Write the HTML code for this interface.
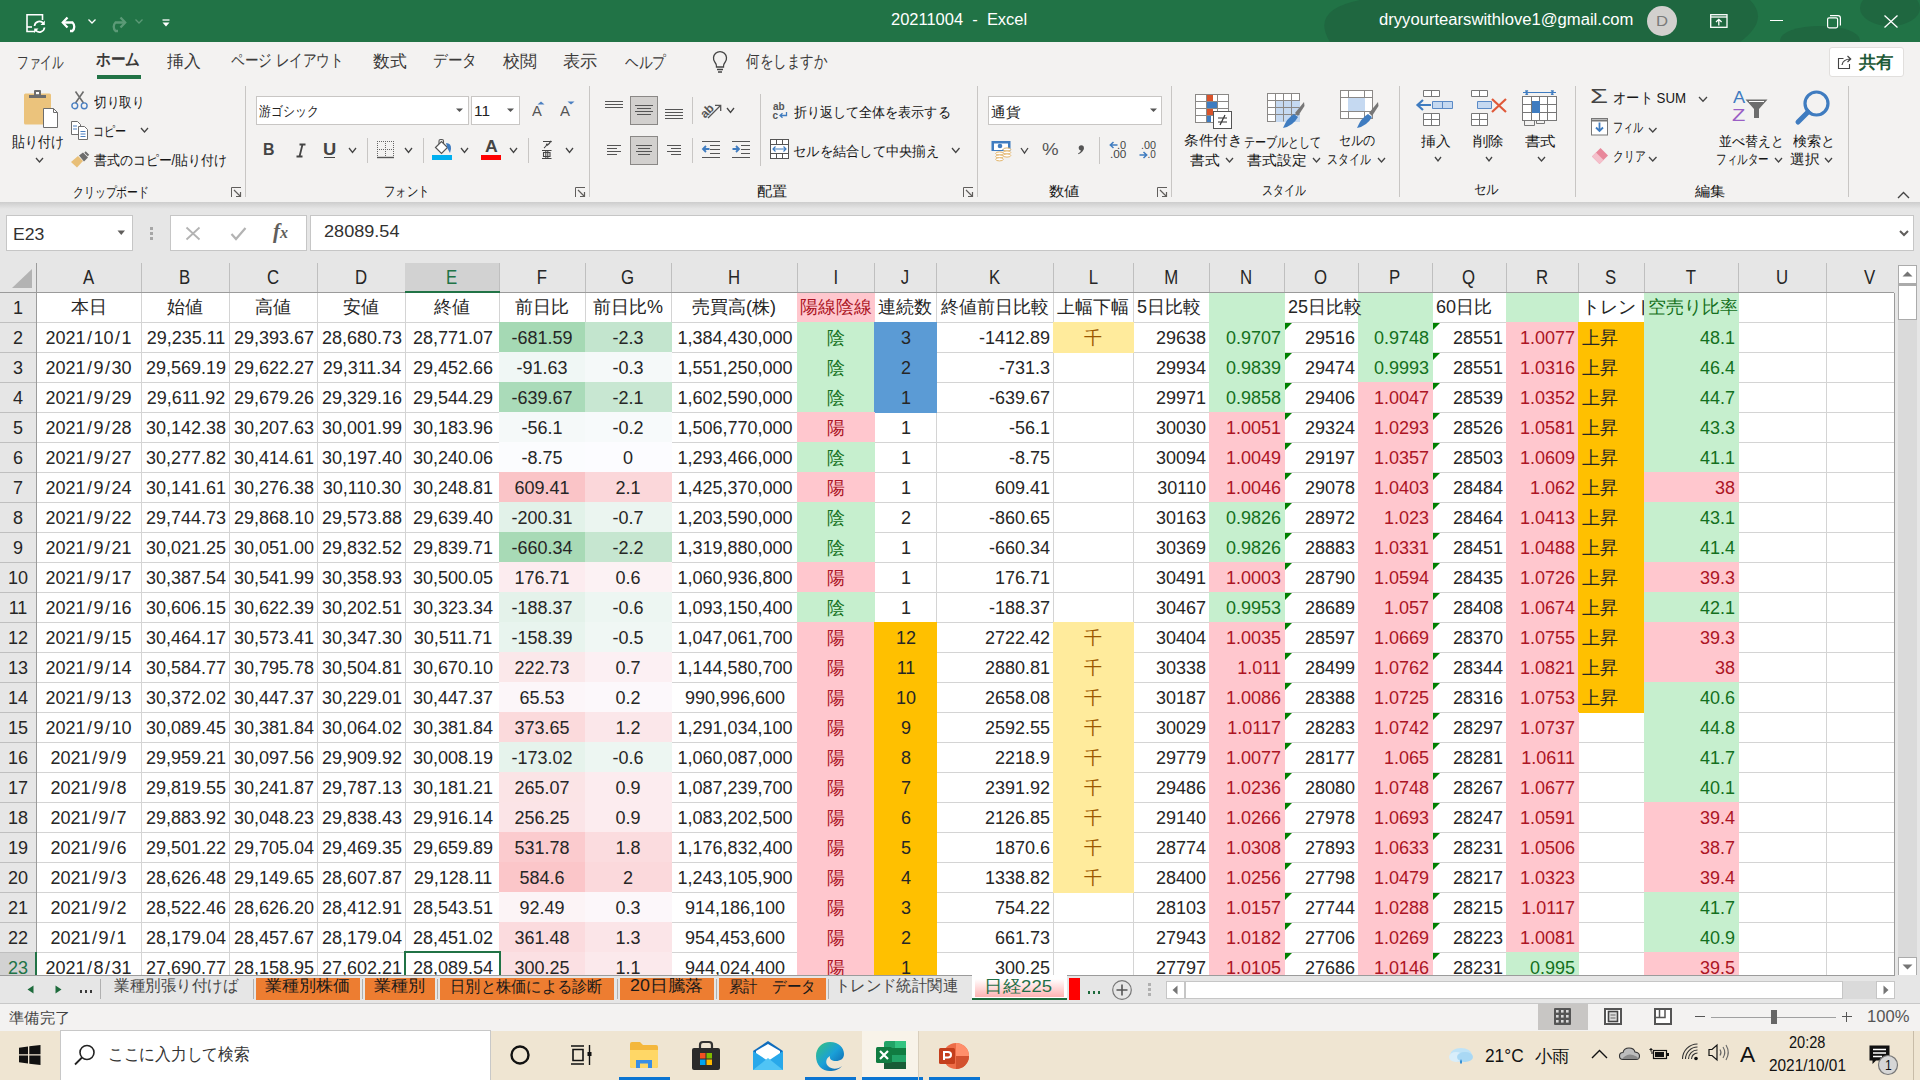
<!DOCTYPE html>
<html><head><meta charset="utf-8"><style>
html,body{margin:0;padding:0;}
body{width:1920px;height:1080px;overflow:hidden;position:relative;background:#f3f2f1;font-family:"Liberation Sans",sans-serif;}
body div, body svg{position:absolute;white-space:nowrap;}
svg{overflow:visible}
</style></head><body>
<div style="left:0px;top:0px;width:1920px;height:42px;background:#217346;overflow:hidden"></div>
<svg style="left:1250px;top:0;overflow:hidden" width="670" height="42" viewBox="0 0 670 42"><g fill="#1f6740"><path d="M80 42 Q60 10 110 0 H500 Q520 20 490 42 Z"/><ellipse cx="570" cy="40" rx="40" ry="14"/><ellipse cx="640" cy="8" rx="30" ry="18"/></g></svg>
<div style="left:890.88px;top:12.28px;font-size:16px;line-height:16px;color:#fff;transform-origin:0 0;transform:scaleX(1.0298);white-space:pre;">20211004  -  Excel</div>
<div style="left:1379.34px;top:12.48px;font-size:16px;line-height:16px;color:#fff;transform-origin:0 0;transform:scaleX(1.0389);">dryyourtearswithlove1@gmail.com</div>
<div style="left:1647px;top:6px;width:30px;height:30px;border-radius:50%;background:#d2d0ce"></div>
<div style="left:1655.67px;top:13.81px;font-size:14px;line-height:14px;color:#7a7a7a;transform-origin:0 0;transform:scaleX(1.1905);">D</div>
<svg style="left:26px;top:14px" width="20" height="19" viewBox="0 0 20 19"><path d="M9 17.5 H1 V0.8 H16.5 V6" fill="none" stroke="#fff" stroke-width="1.6"/><path d="M1 13 H6" stroke="#fff" stroke-width="1.6"/><path d="M8.5 12 A5 5 0 0 1 17.5 9.5" fill="none" stroke="#fff" stroke-width="1.7"/><path d="M18.8 6.5 V11 H14.5 Z" fill="#fff"/><path d="M18.5 13.5 A5 5 0 0 1 9.5 16" fill="none" stroke="#fff" stroke-width="1.7"/><path d="M8.2 19 V14.5 H12.5 Z" fill="#fff"/></svg>
<svg style="left:61px;top:16px" width="19" height="16" viewBox="0 0 19 16"><path d="M3 6.5 H11.5 A6 6 0 0 1 11.5 15 H9" fill="none" stroke="#fff" stroke-width="2.3"/><path d="M6.5 1.5 L1.8 6.5 L6.5 11.5" fill="none" stroke="#fff" stroke-width="2.3"/></svg>
<svg style="left:88px;top:19px" width="8" height="5" viewBox="0 0 8 5"><path d="M0.5 0.5 L4 4 L7.5 0.5" stroke="#fff" stroke-width="1.3" fill="none"/></svg>
<svg style="left:108px;top:16px" width="19" height="16" viewBox="0 0 19 16"><path d="M16 6.5 H7.5 A6 6 0 0 0 7.5 15 H10" fill="none" stroke="#5c9a77" stroke-width="2.3"/><path d="M12.5 1.5 L17.2 6.5 L12.5 11.5" fill="none" stroke="#5c9a77" stroke-width="2.3"/></svg>
<svg style="left:135px;top:19px" width="8" height="5" viewBox="0 0 8 5"><path d="M0.5 0.5 L4 4 L7.5 0.5" stroke="#5c9a77" stroke-width="1.3" fill="none"/></svg>
<svg style="left:162px;top:19px" width="8" height="8" viewBox="0 0 8 8"><path d="M0.5 1 H7.5" stroke="#fff" stroke-width="1.3"/><path d="M0.5 3.5 H7.5 L4 7.5 Z" fill="#fff"/></svg>
<svg style="left:1710px;top:14px" width="18" height="14" viewBox="0 0 18 14"><rect x="0.7" y="0.7" width="16.3" height="12.6" fill="none" stroke="#fff" stroke-width="1.3"/><path d="M0.7 3 H17" stroke="#fff" stroke-width="1.3"/><path d="M8.8 11.5 V5.5 M6 8 L8.8 5.3 L11.6 8" stroke="#fff" stroke-width="1.3" fill="none"/></svg>
<div style="left:1770px;top:20px;width:13px;height:1px;background:#fff"></div>
<svg style="left:1827px;top:15px" width="14" height="13" viewBox="0 0 14 13"><rect x="0.6" y="2.8" width="10" height="10" rx="1.5" fill="none" stroke="#fff" stroke-width="1.2"/><path d="M3 0.6 H11 Q13.4 0.6 13.4 3 V10.5" fill="none" stroke="#fff" stroke-width="1.2"/></svg>
<svg style="left:1884px;top:15px" width="14" height="13" viewBox="0 0 14 13"><path d="M0.5 0.5 L13.5 12.5 M13.5 0.5 L0.5 12.5" stroke="#fff" stroke-width="1.3"/></svg>
<div style="left:16.62px;top:53.69px;font-size:17px;line-height:17px;color:#3b3a39;transform-origin:0 0;transform:scaleX(0.6863);">ファイル</div>
<div style="left:96.32px;top:51.31px;font-size:17px;line-height:17px;color:#3b3a39;transform-origin:0 0;transform:scaleX(0.8591);font-weight:bold;">ホーム</div>
<div style="left:167.23px;top:53.02px;font-size:17px;line-height:17px;color:#3b3a39;transform-origin:0 0;transform:scaleX(0.9894);">挿入</div>
<div style="left:231.03px;top:51.99px;font-size:17px;line-height:17px;color:#3b3a39;transform-origin:0 0;transform:scaleX(0.8009);">ページ レイアウト</div>
<div style="left:372.83px;top:52.85px;font-size:17px;line-height:17px;color:#3b3a39;transform-origin:0 0;transform:scaleX(0.9894);">数式</div>
<div style="left:432.72px;top:52.16px;font-size:17px;line-height:17px;color:#3b3a39;transform-origin:0 0;transform:scaleX(0.8581);">データ</div>
<div style="left:503.10px;top:52.85px;font-size:17px;line-height:17px;color:#3b3a39;transform-origin:0 0;transform:scaleX(0.9976);">校閲</div>
<div style="left:563.48px;top:52.85px;font-size:17px;line-height:17px;color:#3b3a39;transform-origin:0 0;transform:scaleX(1.0119);">表示</div>
<div style="left:625.46px;top:53.69px;font-size:17px;line-height:17px;color:#3b3a39;transform-origin:0 0;transform:scaleX(0.8048);">ヘルプ</div>
<div style="left:746.40px;top:52.84px;font-size:17px;line-height:17px;color:#3b3a39;transform-origin:0 0;transform:scaleX(0.7962);">何をしますか</div>
<div style="left:97px;top:75px;width:44px;height:4px;background:#217346"></div>
<div style="left:245px;top:86px;width:1px;height:111px;background:#c8c6c4"></div>
<div style="left:589px;top:86px;width:1px;height:111px;background:#c8c6c4"></div>
<div style="left:977px;top:86px;width:1px;height:111px;background:#c8c6c4"></div>
<div style="left:1171px;top:86px;width:1px;height:111px;background:#c8c6c4"></div>
<div style="left:1399px;top:86px;width:1px;height:111px;background:#c8c6c4"></div>
<div style="left:1575px;top:86px;width:1px;height:111px;background:#c8c6c4"></div>
<div style="left:1848px;top:86px;width:1px;height:111px;background:#c8c6c4"></div>
<svg style="left:24px;top:90px" width="34" height="38" viewBox="0 0 34 38"><rect x="0" y="3.5" width="27" height="31" rx="1.5" fill="#ebc37c"/><path d="M5 5 H22 V8 H5 Z" fill="#6d6d6d"/><rect x="10" y="0" width="7" height="6" rx="1" fill="#6d6d6d"/><rect x="12" y="2" width="3" height="2.2" fill="#fff"/><path d="M19.5 18.5 H29.5 L33.5 22.5 V37.5 H19.5 Z" fill="#fff" stroke="#6d6d6d" stroke-width="1"/><path d="M29.5 18.5 V22.5 H33.5" fill="none" stroke="#6d6d6d" stroke-width="1"/></svg>
<div style="left:11.87px;top:133.60px;font-size:15px;line-height:15px;color:#161616;transform-origin:0 0;transform:scaleX(0.8588);">貼り付け</div>
<svg style="left:35px;top:156.5px" width="9" height="6" viewBox="0 0 9 6"><path d="M1 1 L4.5 5 L8 1" fill="none" stroke="#444" stroke-width="1.3"/></svg>
<svg style="left:71px;top:91px" width="17" height="19" viewBox="0 0 17 19"><path d="M4.5 12 L12.5 0.5 M12.5 12 L4.5 0.5" stroke="#6d6d6d" stroke-width="1.6" fill="none"/><circle cx="3.8" cy="14.8" r="2.9" fill="none" stroke="#4a7fc1" stroke-width="1.4"/><circle cx="13.2" cy="14.8" r="2.9" fill="none" stroke="#4a7fc1" stroke-width="1.4"/></svg>
<div style="left:94.27px;top:95.23px;font-size:14px;line-height:14px;color:#161616;transform-origin:0 0;transform:scaleX(0.9024);">切り取り</div>
<svg style="left:71px;top:121px" width="18" height="19" viewBox="0 0 18 19"><path d="M0.5 0.5 H6.5 L9.5 3.5 V13.5 H0.5 Z" fill="#fff" stroke="#6d6d6d"/><path d="M7.5 5.5 H13.5 L16.5 8.5 V18.5 H7.5 Z" fill="#fff" stroke="#6d6d6d"/><path d="M2 5 H6 M2 8 H6 M9.5 10.5 H14.5 M9.5 13 H14.5 M9.5 15.5 H14.5" stroke="#4a7fc1" stroke-width="1"/></svg>
<div style="left:92.73px;top:123.96px;font-size:14px;line-height:14px;color:#161616;transform-origin:0 0;transform:scaleX(0.7931);">コピー</div>
<svg style="left:140px;top:127px" width="9" height="6" viewBox="0 0 9 6"><path d="M1 1 L4.5 5 L8 1" fill="none" stroke="#444" stroke-width="1.3"/></svg>
<svg style="left:71px;top:152px" width="18" height="16" viewBox="0 0 18 16"><path d="M0 10 L7 4 L12 9 L6 15.5 Z" fill="#e8bf78"/><path d="M8 3.5 L12 0.5 L17 5.5 L13 9.5 Z" fill="#6d6d6d"/><path d="M14 0 L17.5 3.5" stroke="#6d6d6d" stroke-width="2"/></svg>
<div style="left:94.14px;top:153.38px;font-size:14px;line-height:14px;color:#161616;transform-origin:0 0;transform:scaleX(0.9224);">書式のコピー/貼り付け</div>
<div style="left:73.40px;top:184.51px;font-size:14px;line-height:14px;color:#161616;transform-origin:0 0;transform:scaleX(0.7766);">クリップボード</div>
<svg style="left:231px;top:187px" width="11" height="11" viewBox="0 0 11 11"><path d="M0.5 10 V0.5 H10" fill="none" stroke="#605e5c" stroke-width="1"/><path d="M3 3 L9.5 9.5 M5 9.5 H9.5 V5" fill="none" stroke="#605e5c" stroke-width="1.2"/></svg>
<div style="left:256px;top:96px;width:213px;height:29px;background:#fff;border:1px solid #c8c6c4;box-sizing:border-box"></div>
<div style="left:258.66px;top:104.29px;font-size:14px;line-height:14px;color:#222;transform-origin:0 0;transform:scaleX(0.8504);">游ゴシック</div>
<svg style="left:456px;top:108px" width="8" height="5" viewBox="0 0 8 5"><path d="M0 0.5 H7 L3.5 4 Z" fill="#555"/></svg>
<div style="left:471px;top:96px;width:49px;height:29px;background:#fff;border:1px solid #c8c6c4;box-sizing:border-box"></div>
<div style="left:474.07px;top:104.41px;font-size:14px;line-height:14px;color:#222;transform-origin:0 0;transform:scaleX(1.0967);">11</div>
<svg style="left:507px;top:108px" width="8" height="5" viewBox="0 0 8 5"><path d="M0 0.5 H7 L3.5 4 Z" fill="#555"/></svg>
<div style="left:531.60px;top:103.51px;font-size:14px;line-height:14px;color:#555;transform-origin:0 0;transform:scaleX(1.0498);">A</div>
<svg style="left:537px;top:101px" width="8" height="4" viewBox="0 0 8 4"><path d="M0.5 3.5 L4 0.5 L7.5 3.5 Z" fill="#4a7fc1"/></svg>
<div style="left:560.30px;top:103.51px;font-size:14px;line-height:14px;color:#555;transform-origin:0 0;transform:scaleX(1.0714);">A</div>
<svg style="left:567px;top:101px" width="8" height="4" viewBox="0 0 8 4"><path d="M0.5 0.5 L4 3.5 L7.5 0.5 Z" fill="#4a7fc1"/></svg>
<div style="left:263.09px;top:141.80px;font-size:16px;line-height:16px;color:#444;transform-origin:0 0;transform:scaleX(0.9939);font-weight:bold;">B</div>
<svg style="left:296px;top:144px" width="10" height="13" viewBox="0 0 10 13"><path d="M3.5 0.5 H9.5 M0.5 12.5 H6.5 M6.5 0.5 L3.5 12.5" fill="none" stroke="#444" stroke-width="1.8"/></svg>
<div style="left:322.90px;top:141.80px;font-size:16px;line-height:16px;color:#444;transform-origin:0 0;transform:scaleX(1.1458);font-weight:bold;">U</div>
<div style="left:324px;top:157px;width:11px;height:1px;background:#444"></div>
<svg style="left:348px;top:147.2px" width="9" height="6.4" viewBox="0 0 9 6.4"><path d="M1 1 L4.5 5.4 L8 1" fill="none" stroke="#444" stroke-width="1.3"/></svg>
<div style="left:367px;top:137.6px;width:1px;height:25.700000000000017px;background:#c8c6c4"></div>
<svg style="left:377px;top:141px" width="18" height="18" viewBox="0 0 18 18"><rect x="0.0" y="0" width="1" height="1" fill="#666"/><rect x="0.0" y="2" width="1" height="1" fill="#666"/><rect x="0.0" y="4" width="1" height="1" fill="#666"/><rect x="0.0" y="6" width="1" height="1" fill="#666"/><rect x="0.0" y="8" width="1" height="1" fill="#666"/><rect x="0.0" y="10" width="1" height="1" fill="#666"/><rect x="0.0" y="12" width="1" height="1" fill="#666"/><rect x="0.0" y="14" width="1" height="1" fill="#666"/><rect x="0.0" y="16" width="1" height="1" fill="#666"/><rect x="8.0" y="0" width="1" height="1" fill="#666"/><rect x="8.0" y="2" width="1" height="1" fill="#666"/><rect x="8.0" y="4" width="1" height="1" fill="#666"/><rect x="8.0" y="6" width="1" height="1" fill="#666"/><rect x="8.0" y="8" width="1" height="1" fill="#666"/><rect x="8.0" y="10" width="1" height="1" fill="#666"/><rect x="8.0" y="12" width="1" height="1" fill="#666"/><rect x="8.0" y="14" width="1" height="1" fill="#666"/><rect x="8.0" y="16" width="1" height="1" fill="#666"/><rect x="16.0" y="0" width="1" height="1" fill="#666"/><rect x="16.0" y="2" width="1" height="1" fill="#666"/><rect x="16.0" y="4" width="1" height="1" fill="#666"/><rect x="16.0" y="6" width="1" height="1" fill="#666"/><rect x="16.0" y="8" width="1" height="1" fill="#666"/><rect x="16.0" y="10" width="1" height="1" fill="#666"/><rect x="16.0" y="12" width="1" height="1" fill="#666"/><rect x="16.0" y="14" width="1" height="1" fill="#666"/><rect x="16.0" y="16" width="1" height="1" fill="#666"/><rect x="0" y="0.0" width="1" height="1" fill="#666"/><rect x="2" y="0.0" width="1" height="1" fill="#666"/><rect x="4" y="0.0" width="1" height="1" fill="#666"/><rect x="6" y="0.0" width="1" height="1" fill="#666"/><rect x="8" y="0.0" width="1" height="1" fill="#666"/><rect x="10" y="0.0" width="1" height="1" fill="#666"/><rect x="12" y="0.0" width="1" height="1" fill="#666"/><rect x="14" y="0.0" width="1" height="1" fill="#666"/><rect x="16" y="0.0" width="1" height="1" fill="#666"/><rect x="0" y="8.0" width="1" height="1" fill="#666"/><rect x="2" y="8.0" width="1" height="1" fill="#666"/><rect x="4" y="8.0" width="1" height="1" fill="#666"/><rect x="6" y="8.0" width="1" height="1" fill="#666"/><rect x="8" y="8.0" width="1" height="1" fill="#666"/><rect x="10" y="8.0" width="1" height="1" fill="#666"/><rect x="12" y="8.0" width="1" height="1" fill="#666"/><rect x="14" y="8.0" width="1" height="1" fill="#666"/><rect x="16" y="8.0" width="1" height="1" fill="#666"/><path d="M0 16.5 H17" stroke="#555" stroke-width="1.4"/></svg>
<svg style="left:404px;top:147.2px" width="9" height="6.4" viewBox="0 0 9 6.4"><path d="M1 1 L4.5 5.4 L8 1" fill="none" stroke="#444" stroke-width="1.3"/></svg>
<div style="left:423px;top:137.6px;width:1px;height:25.700000000000017px;background:#c8c6c4"></div>
<svg style="left:432px;top:139px" width="21" height="21" viewBox="0 0 21 21"><path d="M3.5 8.5 L9.5 2.5 L15.5 8.5 L9.5 14.5 Z" fill="#fff" stroke="#555" stroke-width="1.2"/><path d="M7 5 V2 Q7 0.5 8.5 0.5 H10 Q11.5 0.5 11.5 2 V5" fill="none" stroke="#555" stroke-width="1.1"/><path d="M14 4 Q19.5 4 19 10 L18 14 Q16.5 11 15.5 9.5 Z" fill="#3f7cc0"/><rect x="0" y="16" width="20" height="5" fill="#00b0f0"/></svg>
<svg style="left:460px;top:147.2px" width="9" height="6.4" viewBox="0 0 9 6.4"><path d="M1 1 L4.5 5.4 L8 1" fill="none" stroke="#444" stroke-width="1.3"/></svg>
<div style="left:484.67px;top:138.34px;font-size:17px;line-height:17px;color:#444;transform-origin:0 0;transform:scaleX(1.0360);font-weight:bold;">A</div>
<div style="left:481px;top:155px;width:20px;height:5px;background:#ff0000"></div>
<svg style="left:509px;top:147.2px" width="9" height="6.4" viewBox="0 0 9 6.4"><path d="M1 1 L4.5 5.4 L8 1" fill="none" stroke="#444" stroke-width="1.3"/></svg>
<div style="left:528px;top:137.6px;width:1px;height:25.700000000000017px;background:#c8c6c4"></div>
<svg style="left:541px;top:140px" width="12" height="20" viewBox="0 0 12 20"><path d="M2 1.5 H9.5 Q8.5 4 6 5.5 M6 3.5 Q5.5 6.5 3 8" fill="none" stroke="#444" stroke-width="1.2"/><path d="M9.5 0.3 L11 1.5 L9.8 2.8 Z" fill="#444"/><path d="M1 10.5 H10.5 M1 18.5 H10.5 M2.5 12.5 H9 V16.5 H2.5 Z M4.8 10.5 V18.5 M6.8 10.5 V18.5" fill="none" stroke="#444" stroke-width="1.1"/></svg>
<svg style="left:565px;top:147.2px" width="9" height="6.4" viewBox="0 0 9 6.4"><path d="M1 1 L4.5 5.4 L8 1" fill="none" stroke="#444" stroke-width="1.3"/></svg>
<div style="left:384.35px;top:183.73px;font-size:14px;line-height:14px;color:#161616;transform-origin:0 0;transform:scaleX(0.8103);">フォント</div>
<svg style="left:575px;top:187px" width="11" height="11" viewBox="0 0 11 11"><path d="M0.5 10 V0.5 H10" fill="none" stroke="#605e5c" stroke-width="1"/><path d="M3 3 L9.5 9.5 M5 9.5 H9.5 V5" fill="none" stroke="#605e5c" stroke-width="1.2"/></svg>
<div style="left:630px;top:96px;width:28px;height:29px;background:#d2d0ce;border:1px solid #8a8886;box-sizing:border-box"></div>
<div style="left:630px;top:136px;width:28px;height:29px;background:#d2d0ce;border:1px solid #8a8886;box-sizing:border-box"></div>
<svg style="left:0;top:0" width="1920" height="210"><path d="M605 101.5H623M605 104.5H623M605 107.5H623M635 105.5H653M637 108.5H651M635 111.5H653M637 114.5H651M665 109.5H683M665 112.5H683M665 115.5H683M665 118.5H683M607 145.5H621M607 148.5H617M607 151.5H621M607 154.5H617M636 145.5H652M638 148.5H650M636 151.5H652M638 154.5H650M667 145.5H681M671 148.5H681M667 151.5H681M671 154.5H681M702 141.5H720M710 145.5H720M710 149.5H720M710 153.5H720M702 157.5H720M732 141.5H750M741 145.5H750M741 149.5H750M741 153.5H750M732 157.5H750" stroke="#555" stroke-width="1.1" fill="none"/></svg>
<svg style="left:702px;top:145px" width="8" height="8" viewBox="0 0 8 8"><path d="M7.5 4 H1.5 M4 1 L1 4 L4 7" stroke="#3f7cc0" stroke-width="1.8" fill="none"/></svg>
<svg style="left:732px;top:145px" width="8" height="8" viewBox="0 0 8 8"><path d="M0.5 4 H6.5 M4 1 L7 4 L4 7" stroke="#3f7cc0" stroke-width="1.8" fill="none"/></svg>
<div style="left:692px;top:97px;width:1px;height:27px;background:#c8c6c4"></div>
<div style="left:692px;top:137.5px;width:1px;height:25.5px;background:#c8c6c4"></div>
<svg style="left:700px;top:101px" width="22" height="18" viewBox="0 0 22 18"><g transform="rotate(-45 7 10)"><text x="0" y="14" font-family="Liberation Sans" font-weight="bold" font-size="12" fill="#555">ab</text></g><path d="M8 17 L20 5 M15 4.3 H20.7 V10" stroke="#555" stroke-width="1.3" fill="none"/></svg>
<svg style="left:725.6px;top:106.8px" width="9" height="6.5" viewBox="0 0 9 6.5"><path d="M1 1 L4.5 5.5 L8 1" fill="none" stroke="#444" stroke-width="1.3"/></svg>
<div style="left:760px;top:94px;width:1px;height:72px;background:#c8c6c4"></div>
<svg style="left:772px;top:102px" width="18" height="18" viewBox="0 0 18 18"><text x="1" y="8" font-family="Liberation Sans" font-weight="bold" font-size="10" fill="#555">ab</text><text x="0.5" y="16.5" font-family="Liberation Sans" font-weight="bold" font-size="10" fill="#555">c</text><path d="M14.5 10 V13.5 H8.5 M10.5 11.3 L8 13.5 L10.5 15.8" stroke="#3f7cc0" stroke-width="1.3" fill="none"/></svg>
<div style="left:793.77px;top:104.57px;font-size:14px;line-height:14px;color:#161616;transform-origin:0 0;transform:scaleX(0.9319);">折り返して全体を表示する</div>
<svg style="left:770px;top:139px" width="20" height="20" viewBox="0 0 20 20"><rect x="0.5" y="0.5" width="18" height="19" fill="#fff" stroke="#555"/><path d="M0.5 5.5 H18.5 M0.5 14.5 H18.5 M6.5 0.5 V5.5 M12.5 0.5 V5.5 M6.5 14.5 V19.5 M12.5 14.5 V19.5" stroke="#555" fill="none"/><path d="M3 10 H16 M5.5 7.5 L3 10 L5.5 12.5 M13.5 7.5 L16 10 L13.5 12.5" stroke="#3f7cc0" stroke-width="1.2" fill="none"/></svg>
<div style="left:793.10px;top:144.03px;font-size:14px;line-height:14px;color:#161616;transform-origin:0 0;transform:scaleX(0.9483);">セルを結合して中央揃え</div>
<svg style="left:951.2px;top:147.4px" width="9.5" height="6.5" viewBox="0 0 9.5 6.5"><path d="M1 1 L4.75 5.5 L8.5 1" fill="none" stroke="#444" stroke-width="1.3"/></svg>
<div style="left:757.09px;top:183.79px;font-size:14px;line-height:14px;color:#161616;transform-origin:0 0;transform:scaleX(1.0863);">配置</div>
<svg style="left:963px;top:187px" width="11" height="11" viewBox="0 0 11 11"><path d="M0.5 10 V0.5 H10" fill="none" stroke="#605e5c" stroke-width="1"/><path d="M3 3 L9.5 9.5 M5 9.5 H9.5 V5" fill="none" stroke="#605e5c" stroke-width="1.2"/></svg>
<div style="left:988px;top:96px;width:174px;height:29px;background:#fff;border:1px solid #c8c6c4;box-sizing:border-box"></div>
<div style="left:991.06px;top:104.97px;font-size:14px;line-height:14px;color:#222;transform-origin:0 0;transform:scaleX(1.0493);">通貨</div>
<svg style="left:1150px;top:108px" width="8" height="5" viewBox="0 0 8 5"><path d="M0 0.5 H7 L3.5 4 Z" fill="#555"/></svg>
<svg style="left:991px;top:140px" width="21" height="21" viewBox="0 0 21 21"><rect x="0.5" y="1" width="19" height="10" fill="#3f7cc0"/><path d="M3 3.5 H17 V8.5 H14 Q12 8.5 11 10 H3 Z" fill="#fff"/><circle cx="9" cy="6" r="2.3" fill="#3f7cc0"/><g fill="#fff" stroke="#e3b66e" stroke-width="1"><ellipse cx="16" cy="9.5" rx="3.8" ry="1.6"/><ellipse cx="16" cy="12.5" rx="3.8" ry="1.6"/><ellipse cx="16" cy="15.5" rx="3.8" ry="1.6"/><ellipse cx="8.5" cy="13.5" rx="3.8" ry="1.6"/><ellipse cx="8.5" cy="16.5" rx="3.8" ry="1.6"/><ellipse cx="8.5" cy="19.3" rx="3.8" ry="1.6"/></g></svg>
<svg style="left:1020px;top:146.6px" width="9" height="7" viewBox="0 0 9 7"><path d="M1 1 L4.5 6 L8 1" fill="none" stroke="#444" stroke-width="1.3"/></svg>
<div style="left:1042.34px;top:140.51px;font-size:17px;line-height:17px;color:#555;transform-origin:0 0;transform:scaleX(1.0976);">%</div>
<svg style="left:1077px;top:145px" width="8" height="10" viewBox="0 0 8 10"><circle cx="4.3" cy="2.8" r="2.6" fill="#555"/><path d="M6.6 3 Q6.8 7 1.5 9.3 L1 8.6 Q4 7 4.2 4.5 Z" fill="#555"/></svg>
<div style="left:1099px;top:137.3px;width:1px;height:26.299999999999983px;background:#c8c6c4"></div>
<div style="left:1117.01px;top:140.53px;font-size:10px;line-height:10px;color:#444;transform-origin:0 0;transform:scaleX(1.0986);">.0</div>
<div style="left:1109.94px;top:149.53px;font-size:10px;line-height:10px;color:#444;transform-origin:0 0;transform:scaleX(1.1746);">.00</div>
<svg style="left:1109px;top:141px" width="9" height="8" viewBox="0 0 9 8"><path d="M8.5 4 H1.5 M4.5 1 L1.3 4 L4.5 7" stroke="#3f7cc0" stroke-width="1.5" fill="none"/></svg>
<div style="left:1141.03px;top:140.53px;font-size:10px;line-height:10px;color:#444;transform-origin:0 0;transform:scaleX(1.0794);">.00</div>
<div style="left:1147.60px;top:149.53px;font-size:10px;line-height:10px;color:#444;transform-origin:0 0;transform:scaleX(1.0000);">.0</div>
<svg style="left:1139px;top:150.5px" width="9" height="8" viewBox="0 0 9 8"><path d="M0.5 4 H7.5 M4.5 1 L7.7 4 L4.5 7" stroke="#3f7cc0" stroke-width="1.5" fill="none"/></svg>
<div style="left:1048.85px;top:183.65px;font-size:14px;line-height:14px;color:#161616;transform-origin:0 0;transform:scaleX(1.0952);">数値</div>
<svg style="left:1157px;top:187px" width="11" height="11" viewBox="0 0 11 11"><path d="M0.5 10 V0.5 H10" fill="none" stroke="#605e5c" stroke-width="1"/><path d="M3 3 L9.5 9.5 M5 9.5 H9.5 V5" fill="none" stroke="#605e5c" stroke-width="1.2"/></svg>
<svg style="left:1195px;top:94px" width="37" height="35" viewBox="0 0 37 35"><g stroke="#8a8886" fill="#fff"><rect x="0.5" y="0.5" width="33" height="28"/></g><path d="M0.5 7.5H33.5M0.5 14.5H33.5M0.5 21.5H33.5M11.5 0.5V28.5M22.5 0.5V28.5" stroke="#8a8886" fill="none"/><rect x="12" y="1" width="6" height="6" fill="#d9532b"/><rect x="12" y="8" width="10" height="6" fill="#3f7cc0"/><rect x="12" y="15" width="6" height="6" fill="#d9532b"/><rect x="12" y="22" width="4" height="6" fill="#3f7cc0"/><rect x="18.5" y="17.5" width="18" height="17" fill="#fff" stroke="#555"/><path d="M23 24 H32 M23 28 H32 M30 21 L25 31" stroke="#333" stroke-width="1.2"/></svg>
<div style="left:1183.86px;top:133.25px;font-size:14px;line-height:14px;color:#161616;transform-origin:0 0;transform:scaleX(1.0448);">条件付き</div>
<div style="left:1189.71px;top:152.93px;font-size:14px;line-height:14px;color:#161616;transform-origin:0 0;transform:scaleX(1.0530);">書式</div>
<svg style="left:1225px;top:156.9px" width="9" height="6" viewBox="0 0 9 6"><path d="M1 1 L4.5 5 L8 1" fill="none" stroke="#444" stroke-width="1.3"/></svg>
<svg style="left:1267px;top:93px" width="38" height="36" viewBox="0 0 38 36"><rect x="0.5" y="0.5" width="32" height="28" fill="#fff" stroke="#8a8886"/><rect x="9" y="8" width="24" height="21" fill="#c5d9f1"/><path d="M0.5 7.5H32.5M0.5 14.5H32.5M0.5 21.5H32.5M8.5 0.5V28.5M16.5 0.5V28.5M24.5 0.5V28.5" stroke="#8a8886" fill="none"/><path d="M37 9 L28 20 L31 23 L37.5 13 Z" fill="#777"/><path d="M27 21 Q20 25 16 35 Q26 33 31 24 Z" fill="#3f7cc0"/></svg>
<div style="left:1244.22px;top:134.91px;font-size:14px;line-height:14px;color:#161616;transform-origin:0 0;transform:scaleX(0.7916);">テーブルとして</div>
<div style="left:1247.40px;top:153.21px;font-size:14px;line-height:14px;color:#161616;transform-origin:0 0;transform:scaleX(1.0596);">書式設定</div>
<svg style="left:1311.6px;top:156.9px" width="9" height="6" viewBox="0 0 9 6"><path d="M1 1 L4.5 5 L8 1" fill="none" stroke="#444" stroke-width="1.3"/></svg>
<svg style="left:1340px;top:90px" width="39" height="39" viewBox="0 0 39 39"><rect x="0.5" y="0.5" width="32" height="28" fill="#fff" stroke="#8a8886"/><path d="M0.5 7.5H32.5M0.5 21.5H32.5M8.5 0.5V7.5M24.5 0.5V7.5M8.5 21.5V28.5M24.5 21.5V28.5" stroke="#8a8886" fill="none"/><rect x="8" y="8" width="17" height="13" fill="#c5d9f1"/><path d="M38 12 L29 23 L32 26 L38.5 16 Z" fill="#777"/><path d="M28 24 Q21 28 17 38 Q27 36 32 27 Z" fill="#3f7cc0"/></svg>
<div style="left:1339.28px;top:132.81px;font-size:14px;line-height:14px;color:#161616;transform-origin:0 0;transform:scaleX(0.8620);">セルの</div>
<div style="left:1326.63px;top:151.95px;font-size:14px;line-height:14px;color:#161616;transform-origin:0 0;transform:scaleX(0.7787);">スタイル</div>
<svg style="left:1377px;top:156.9px" width="9" height="6" viewBox="0 0 9 6"><path d="M1 1 L4.5 5 L8 1" fill="none" stroke="#444" stroke-width="1.3"/></svg>
<div style="left:1262.43px;top:182.95px;font-size:14px;line-height:14px;color:#161616;transform-origin:0 0;transform:scaleX(0.7805);">スタイル</div>
<svg style="left:1416px;top:90px" width="38" height="37" viewBox="0 0 38 37"><path d="M7.5 0.5h16v6h-16z M15.5 0.5v6 M7.5 23.5h16v12h-16z M7.5 29.5h16 M15.5 23.5v12" stroke="#777" fill="#fff"/><path d="M16.5 11.5h20v7h-20z M26.5 11.5v7" stroke="#5a8ac6" fill="#c5d9f1"/><path d="M15 15 H2 M7 10 L1.5 15 L7 20" stroke="#3f7cc0" stroke-width="2.2" fill="none"/></svg>
<div style="left:1420.85px;top:133.77px;font-size:14px;line-height:14px;color:#161616;transform-origin:0 0;transform:scaleX(1.0623);">挿入</div>
<svg style="left:1433.7px;top:156.2px" width="8" height="6" viewBox="0 0 8 6"><path d="M1 1 L4.0 5 L7 1" fill="none" stroke="#444" stroke-width="1.3"/></svg>
<svg style="left:1471px;top:90px" width="37" height="37" viewBox="0 0 37 37"><path d="M0.5 0.5h16v6h-16z M8.5 0.5v6 M0.5 23.5h16v12h-16z M0.5 29.5h16 M8.5 23.5v12" stroke="#777" fill="#fff"/><path d="M6.5 11.5h14v7h-14z" stroke="#5a8ac6" fill="#c5d9f1"/><path d="M21 9 L35 22 M35 9 L21 22" stroke="#e05a3a" stroke-width="2.2"/></svg>
<div style="left:1472.69px;top:133.63px;font-size:14px;line-height:14px;color:#161616;transform-origin:0 0;transform:scaleX(1.1009);">削除</div>
<svg style="left:1485px;top:156.2px" width="8" height="6" viewBox="0 0 8 6"><path d="M1 1 L4.0 5 L7 1" fill="none" stroke="#444" stroke-width="1.3"/></svg>
<svg style="left:1522px;top:89px" width="36" height="38" viewBox="0 0 36 38"><path d="M1 3.5H34 M4 1V6 M31 1V6 M6 1.5L3.5 3.5L6 5.5 M29 1.5L31.5 3.5L29 5.5" stroke="#3f7cc0" stroke-width="1.2" fill="none"/><rect x="0.5" y="7.5" width="34" height="24" fill="#fff" stroke="#777"/><path d="M0.5 15.5H34.5M0.5 23.5H34.5M9.5 7.5V31.5M17.5 7.5V31.5M25.5 7.5V31.5" stroke="#777" fill="none"/><rect x="10" y="12" width="8" height="12" fill="#3f7cc0"/><path d="M2.5 31.5 v5 h10 v-5 M14.5 31.5 v3 h8 v-3" stroke="#777" fill="none"/></svg>
<div style="left:1524.69px;top:133.63px;font-size:14px;line-height:14px;color:#161616;transform-origin:0 0;transform:scaleX(1.1046);">書式</div>
<svg style="left:1537px;top:156.2px" width="9" height="6" viewBox="0 0 9 6"><path d="M1 1 L4.5 5 L8 1" fill="none" stroke="#444" stroke-width="1.3"/></svg>
<div style="left:1473.75px;top:182.11px;font-size:14px;line-height:14px;color:#161616;transform-origin:0 0;transform:scaleX(0.8892);">セル</div>
<div style="left:1590.35px;top:86.37px;font-size:20px;line-height:20px;color:#444;transform-origin:0 0;transform:scaleX(1.4528);">Σ</div>
<div style="left:1613.20px;top:90.30px;font-size:15px;line-height:15px;color:#161616;transform-origin:0 0;transform:scaleX(0.8852);">オート SUM</div>
<svg style="left:1698.3px;top:95.8px" width="10" height="6.2" viewBox="0 0 10 6.2"><path d="M1 1 L5.0 5.2 L9 1" fill="none" stroke="#444" stroke-width="1.3"/></svg>
<svg style="left:1591px;top:118px" width="18" height="18" viewBox="0 0 18 18"><rect x="0.5" y="0.5" width="16" height="16.5" fill="#fff" stroke="#777"/><path d="M0.5 2.5 H16.5" stroke="#777" stroke-width="2"/><path d="M8.5 4.5 V13 M5 9.5 L8.5 13 L12 9.5" stroke="#3f7cc0" stroke-width="1.8" fill="none"/></svg>
<div style="left:1612.89px;top:119.53px;font-size:14px;line-height:14px;color:#161616;transform-origin:0 0;transform:scaleX(0.7240);">フィル</div>
<svg style="left:1648px;top:126.5px" width="9.5" height="6" viewBox="0 0 9.5 6"><path d="M1 1 L4.75 5 L8.5 1" fill="none" stroke="#444" stroke-width="1.3"/></svg>
<svg style="left:1591px;top:147px" width="18" height="18" viewBox="0 0 18 18"><path d="M9.5 1 L17 8.5 L8.5 17 L1 9.5 Z" fill="#e8879a"/><path d="M1 9.5 L5 5.5 L12.5 13 L8.5 17 Z" fill="#f4c0cb"/></svg>
<div style="left:1612.81px;top:149.37px;font-size:14px;line-height:14px;color:#161616;transform-origin:0 0;transform:scaleX(0.7715);">クリア</div>
<svg style="left:1648px;top:155.5px" width="9.5" height="6" viewBox="0 0 9.5 6"><path d="M1 1 L4.75 5 L8.5 1" fill="none" stroke="#444" stroke-width="1.3"/></svg>
<div style="left:1733.00px;top:89.70px;font-size:16px;line-height:16px;color:#3f7cc0;transform-origin:0 0;transform:scaleX(1.1364);">A</div>
<div style="left:1732.35px;top:107.50px;font-size:16px;line-height:16px;color:#9a5fc5;transform-origin:0 0;transform:scaleX(1.3636);">Z</div>
<svg style="left:1745px;top:99px" width="24" height="20" viewBox="0 0 24 20"><path d="M0.5 0.5 H22.5 L14 10 V19 H9 V10 Z" fill="#6d6d6d"/><path d="M4 2.5 H19" stroke="#fff" stroke-width="1"/></svg>
<div style="left:1719.34px;top:133.63px;font-size:14px;line-height:14px;color:#161616;transform-origin:0 0;transform:scaleX(0.9232);">並べ替えと</div>
<div style="left:1715.74px;top:151.65px;font-size:14px;line-height:14px;color:#161616;transform-origin:0 0;transform:scaleX(0.7523);">フィルター</div>
<svg style="left:1774px;top:156.5px" width="9" height="6" viewBox="0 0 9 6"><path d="M1 1 L4.5 5 L8 1" fill="none" stroke="#444" stroke-width="1.3"/></svg>
<svg style="left:1795px;top:90px" width="36" height="36" viewBox="0 0 36 36"><circle cx="21.5" cy="13.5" r="11.5" fill="none" stroke="#3f7cc0" stroke-width="3.2"/><path d="M13 22 L3 32" stroke="#3f7cc0" stroke-width="5" stroke-linecap="round"/></svg>
<div style="left:1792.56px;top:133.77px;font-size:14px;line-height:14px;color:#161616;transform-origin:0 0;transform:scaleX(1.0098);">検索と</div>
<div style="left:1789.56px;top:152.49px;font-size:14px;line-height:14px;color:#161616;transform-origin:0 0;transform:scaleX(1.0548);">選択</div>
<svg style="left:1824px;top:156.5px" width="9" height="6" viewBox="0 0 9 6"><path d="M1 1 L4.5 5 L8 1" fill="none" stroke="#444" stroke-width="1.3"/></svg>
<div style="left:1695.20px;top:183.93px;font-size:14px;line-height:14px;color:#161616;transform-origin:0 0;transform:scaleX(1.0860);">編集</div>
<svg style="left:1897px;top:191px" width="13" height="8" viewBox="0 0 13 8"><path d="M1 7 L6.5 1.5 L12 7" stroke="#444" stroke-width="1.4" fill="none"/></svg>
<div style="left:1829px;top:47px;width:75px;height:30px;background:#fff;border:1px solid #e1dfdd;border-radius:3px;box-sizing:border-box"></div>
<svg style="left:1838px;top:54px" width="14" height="15" viewBox="0 0 14 15"><path d="M5.5 4.5 H0.5 V14.5 H11.5 V10" stroke="#444" stroke-width="1.1" fill="none"/><path d="M4 11 Q5 5 12.5 5 M9.5 2 L12.7 5 L9.5 8" stroke="#444" stroke-width="1.2" fill="none"/></svg>
<div style="left:1858.65px;top:54.25px;font-size:17px;line-height:17px;color:#1d5a37;transform-origin:0 0;transform:scaleX(1.0158);font-weight:bold;">共有</div>
<svg style="left:712px;top:53px" width="17" height="21" viewBox="0 0 17 21"><path d="M4.5 14 Q4.5 11 2.8 9 A6.5 6.5 0 1 1 13.2 9 Q11.5 11 11.5 14 Z" fill="none" stroke="#444" stroke-width="1.3"/><path d="M5 16.5 H11 M6 19 H10" stroke="#444" stroke-width="1.3"/></svg>
<div style="left:0px;top:202px;width:1920px;height:61px;background:#e6e6e6"></div>
<div style="left:0px;top:202px;width:1920px;height:7px;background:linear-gradient(#cdcdcd,#e6e6e6)"></div>
<div style="left:6px;top:215px;width:127px;height:36px;background:#fff;border:1px solid #c6c6c6;box-sizing:border-box"></div>
<div style="left:12.79px;top:225.81px;font-size:17px;line-height:17px;color:#323130;transform-origin:0 0;transform:scaleX(1.0374);">E23</div>
<svg style="left:117px;top:230px" width="9" height="6" viewBox="0 0 9 6"><path d="M0.5 0.5 H8 L4.25 5 Z" fill="#605e5c"/></svg>
<div style="left:150px;top:227px;width:3px;height:3px;background:#a6a6a6"></div>
<div style="left:150px;top:232px;width:3px;height:3px;background:#a6a6a6"></div>
<div style="left:150px;top:237px;width:3px;height:3px;background:#a6a6a6"></div>
<div style="left:170px;top:215px;width:137px;height:36px;background:#fff;border:1px solid #c6c6c6;box-sizing:border-box"></div>
<svg style="left:185px;top:226px" width="16" height="15" viewBox="0 0 16 15"><path d="M1.5 1.5 L14.5 13.5 M14.5 1.5 L1.5 13.5" stroke="#b3b3b3" stroke-width="1.8"/></svg>
<svg style="left:230px;top:226px" width="17" height="15" viewBox="0 0 17 15"><path d="M1.5 8 L6 13 L15.5 2" stroke="#b3b3b3" stroke-width="2.2" fill="none"/></svg>
<div style="left:273px;top:221px;font-family:'Liberation Serif',serif;font-style:italic;font-weight:bold;font-size:21px;line-height:21px;color:#605e5c">f<span style="font-size:16px">x</span></div>
<div style="left:310px;top:215px;width:1604px;height:36px;background:#fff;border:1px solid #c6c6c6;box-sizing:border-box"></div>
<div style="left:324.10px;top:222.51px;font-size:17px;line-height:17px;color:#323130;transform-origin:0 0;transform:scaleX(1.0643);">28089.54</div>
<svg style="left:1899px;top:230px" width="10" height="7" viewBox="0 0 10 7"><path d="M1 1 L5 5 L9 1" stroke="#605e5c" stroke-width="2" fill="none"/></svg>
<div style="left:0px;top:263px;width:1894px;height:29px;background:#e6e6e6"></div>
<div style="left:0px;top:263px;width:36px;height:712px;background:#e6e6e6"></div>
<div style="left:37px;top:293px;width:1857px;height:682px;background:#fff"></div>
<div style="left:141px;top:263px;width:1px;height:29px;background:#bfbfbf"></div>
<div style="left:229px;top:263px;width:1px;height:29px;background:#bfbfbf"></div>
<div style="left:317px;top:263px;width:1px;height:29px;background:#bfbfbf"></div>
<div style="left:405px;top:263px;width:1px;height:29px;background:#bfbfbf"></div>
<div style="left:499px;top:263px;width:1px;height:29px;background:#bfbfbf"></div>
<div style="left:585px;top:263px;width:1px;height:29px;background:#bfbfbf"></div>
<div style="left:671px;top:263px;width:1px;height:29px;background:#bfbfbf"></div>
<div style="left:797px;top:263px;width:1px;height:29px;background:#bfbfbf"></div>
<div style="left:874px;top:263px;width:1px;height:29px;background:#bfbfbf"></div>
<div style="left:936px;top:263px;width:1px;height:29px;background:#bfbfbf"></div>
<div style="left:1053px;top:263px;width:1px;height:29px;background:#bfbfbf"></div>
<div style="left:1133px;top:263px;width:1px;height:29px;background:#bfbfbf"></div>
<div style="left:1209px;top:263px;width:1px;height:29px;background:#bfbfbf"></div>
<div style="left:1284px;top:263px;width:1px;height:29px;background:#bfbfbf"></div>
<div style="left:1358px;top:263px;width:1px;height:29px;background:#bfbfbf"></div>
<div style="left:1432px;top:263px;width:1px;height:29px;background:#bfbfbf"></div>
<div style="left:1506px;top:263px;width:1px;height:29px;background:#bfbfbf"></div>
<div style="left:1578px;top:263px;width:1px;height:29px;background:#bfbfbf"></div>
<div style="left:1644px;top:263px;width:1px;height:29px;background:#bfbfbf"></div>
<div style="left:1738px;top:263px;width:1px;height:29px;background:#bfbfbf"></div>
<div style="left:1826px;top:263px;width:1px;height:29px;background:#bfbfbf"></div>
<div style="left:0px;top:292px;width:1894px;height:1px;background:#9b9b9b"></div>
<div style="left:36px;top:263px;width:1px;height:712px;background:#9b9b9b"></div>
<div style="left:405px;top:263px;width:94px;height:29px;background:#d2d2d2"></div>
<div style="left:405px;top:291px;width:95px;height:2px;background:#217346"></div>
<div style="left:36px;top:268px;width:105px;text-align:center;font-size:19.5px;line-height:19.5px;color:#262626"><span style="display:inline-block;transform:scaleX(0.86)">A</span></div>
<div style="left:141px;top:268px;width:88px;text-align:center;font-size:19.5px;line-height:19.5px;color:#262626"><span style="display:inline-block;transform:scaleX(0.86)">B</span></div>
<div style="left:229px;top:268px;width:88px;text-align:center;font-size:19.5px;line-height:19.5px;color:#262626"><span style="display:inline-block;transform:scaleX(0.86)">C</span></div>
<div style="left:317px;top:268px;width:88px;text-align:center;font-size:19.5px;line-height:19.5px;color:#262626"><span style="display:inline-block;transform:scaleX(0.86)">D</span></div>
<div style="left:405px;top:268px;width:94px;text-align:center;font-size:19.5px;line-height:19.5px;color:#217346"><span style="display:inline-block;transform:scaleX(0.86)">E</span></div>
<div style="left:499px;top:268px;width:86px;text-align:center;font-size:19.5px;line-height:19.5px;color:#262626"><span style="display:inline-block;transform:scaleX(0.86)">F</span></div>
<div style="left:585px;top:268px;width:86px;text-align:center;font-size:19.5px;line-height:19.5px;color:#262626"><span style="display:inline-block;transform:scaleX(0.86)">G</span></div>
<div style="left:671px;top:268px;width:126px;text-align:center;font-size:19.5px;line-height:19.5px;color:#262626"><span style="display:inline-block;transform:scaleX(0.86)">H</span></div>
<div style="left:797px;top:268px;width:77px;text-align:center;font-size:19.5px;line-height:19.5px;color:#262626"><span style="display:inline-block;transform:scaleX(0.86)">I</span></div>
<div style="left:874px;top:268px;width:62px;text-align:center;font-size:19.5px;line-height:19.5px;color:#262626"><span style="display:inline-block;transform:scaleX(0.86)">J</span></div>
<div style="left:936px;top:268px;width:117px;text-align:center;font-size:19.5px;line-height:19.5px;color:#262626"><span style="display:inline-block;transform:scaleX(0.86)">K</span></div>
<div style="left:1053px;top:268px;width:80px;text-align:center;font-size:19.5px;line-height:19.5px;color:#262626"><span style="display:inline-block;transform:scaleX(0.86)">L</span></div>
<div style="left:1133px;top:268px;width:76px;text-align:center;font-size:19.5px;line-height:19.5px;color:#262626"><span style="display:inline-block;transform:scaleX(0.86)">M</span></div>
<div style="left:1209px;top:268px;width:75px;text-align:center;font-size:19.5px;line-height:19.5px;color:#262626"><span style="display:inline-block;transform:scaleX(0.86)">N</span></div>
<div style="left:1284px;top:268px;width:74px;text-align:center;font-size:19.5px;line-height:19.5px;color:#262626"><span style="display:inline-block;transform:scaleX(0.86)">O</span></div>
<div style="left:1358px;top:268px;width:74px;text-align:center;font-size:19.5px;line-height:19.5px;color:#262626"><span style="display:inline-block;transform:scaleX(0.86)">P</span></div>
<div style="left:1432px;top:268px;width:74px;text-align:center;font-size:19.5px;line-height:19.5px;color:#262626"><span style="display:inline-block;transform:scaleX(0.86)">Q</span></div>
<div style="left:1506px;top:268px;width:72px;text-align:center;font-size:19.5px;line-height:19.5px;color:#262626"><span style="display:inline-block;transform:scaleX(0.86)">R</span></div>
<div style="left:1578px;top:268px;width:66px;text-align:center;font-size:19.5px;line-height:19.5px;color:#262626"><span style="display:inline-block;transform:scaleX(0.86)">S</span></div>
<div style="left:1644px;top:268px;width:94px;text-align:center;font-size:19.5px;line-height:19.5px;color:#262626"><span style="display:inline-block;transform:scaleX(0.86)">T</span></div>
<div style="left:1738px;top:268px;width:88px;text-align:center;font-size:19.5px;line-height:19.5px;color:#262626"><span style="display:inline-block;transform:scaleX(0.86)">U</span></div>
<div style="left:1826px;top:268px;width:88px;text-align:center;font-size:19.5px;line-height:19.5px;color:#262626"><span style="display:inline-block;transform:scaleX(0.86)">V</span></div>
<svg style="left:9px;top:267px" width="24" height="22"><path d="M23 2 L23 21 L3 21 Z" fill="#b3b3b3"/></svg>
<div style="left:0px;top:322px;width:36px;height:1px;background:#bfbfbf"></div>
<div style="left:0;top:299px;width:36px;text-align:center;font-size:18px;line-height:18px;color:#262626">1</div>
<div style="left:0px;top:352px;width:36px;height:1px;background:#bfbfbf"></div>
<div style="left:0;top:329px;width:36px;text-align:center;font-size:18px;line-height:18px;color:#262626">2</div>
<div style="left:0px;top:382px;width:36px;height:1px;background:#bfbfbf"></div>
<div style="left:0;top:359px;width:36px;text-align:center;font-size:18px;line-height:18px;color:#262626">3</div>
<div style="left:0px;top:412px;width:36px;height:1px;background:#bfbfbf"></div>
<div style="left:0;top:389px;width:36px;text-align:center;font-size:18px;line-height:18px;color:#262626">4</div>
<div style="left:0px;top:442px;width:36px;height:1px;background:#bfbfbf"></div>
<div style="left:0;top:419px;width:36px;text-align:center;font-size:18px;line-height:18px;color:#262626">5</div>
<div style="left:0px;top:472px;width:36px;height:1px;background:#bfbfbf"></div>
<div style="left:0;top:449px;width:36px;text-align:center;font-size:18px;line-height:18px;color:#262626">6</div>
<div style="left:0px;top:502px;width:36px;height:1px;background:#bfbfbf"></div>
<div style="left:0;top:479px;width:36px;text-align:center;font-size:18px;line-height:18px;color:#262626">7</div>
<div style="left:0px;top:532px;width:36px;height:1px;background:#bfbfbf"></div>
<div style="left:0;top:509px;width:36px;text-align:center;font-size:18px;line-height:18px;color:#262626">8</div>
<div style="left:0px;top:562px;width:36px;height:1px;background:#bfbfbf"></div>
<div style="left:0;top:539px;width:36px;text-align:center;font-size:18px;line-height:18px;color:#262626">9</div>
<div style="left:0px;top:592px;width:36px;height:1px;background:#bfbfbf"></div>
<div style="left:0;top:569px;width:36px;text-align:center;font-size:18px;line-height:18px;color:#262626">10</div>
<div style="left:0px;top:622px;width:36px;height:1px;background:#bfbfbf"></div>
<div style="left:0;top:599px;width:36px;text-align:center;font-size:18px;line-height:18px;color:#262626">11</div>
<div style="left:0px;top:652px;width:36px;height:1px;background:#bfbfbf"></div>
<div style="left:0;top:629px;width:36px;text-align:center;font-size:18px;line-height:18px;color:#262626">12</div>
<div style="left:0px;top:682px;width:36px;height:1px;background:#bfbfbf"></div>
<div style="left:0;top:659px;width:36px;text-align:center;font-size:18px;line-height:18px;color:#262626">13</div>
<div style="left:0px;top:712px;width:36px;height:1px;background:#bfbfbf"></div>
<div style="left:0;top:689px;width:36px;text-align:center;font-size:18px;line-height:18px;color:#262626">14</div>
<div style="left:0px;top:742px;width:36px;height:1px;background:#bfbfbf"></div>
<div style="left:0;top:719px;width:36px;text-align:center;font-size:18px;line-height:18px;color:#262626">15</div>
<div style="left:0px;top:772px;width:36px;height:1px;background:#bfbfbf"></div>
<div style="left:0;top:749px;width:36px;text-align:center;font-size:18px;line-height:18px;color:#262626">16</div>
<div style="left:0px;top:802px;width:36px;height:1px;background:#bfbfbf"></div>
<div style="left:0;top:779px;width:36px;text-align:center;font-size:18px;line-height:18px;color:#262626">17</div>
<div style="left:0px;top:832px;width:36px;height:1px;background:#bfbfbf"></div>
<div style="left:0;top:809px;width:36px;text-align:center;font-size:18px;line-height:18px;color:#262626">18</div>
<div style="left:0px;top:862px;width:36px;height:1px;background:#bfbfbf"></div>
<div style="left:0;top:839px;width:36px;text-align:center;font-size:18px;line-height:18px;color:#262626">19</div>
<div style="left:0px;top:892px;width:36px;height:1px;background:#bfbfbf"></div>
<div style="left:0;top:869px;width:36px;text-align:center;font-size:18px;line-height:18px;color:#262626">20</div>
<div style="left:0px;top:922px;width:36px;height:1px;background:#bfbfbf"></div>
<div style="left:0;top:899px;width:36px;text-align:center;font-size:18px;line-height:18px;color:#262626">21</div>
<div style="left:0px;top:952px;width:36px;height:1px;background:#bfbfbf"></div>
<div style="left:0;top:929px;width:36px;text-align:center;font-size:18px;line-height:18px;color:#262626">22</div>
<div style="left:0px;top:982px;width:36px;height:1px;background:#bfbfbf"></div>
<div style="left:0px;top:953px;width:36px;height:29px;background:#d2d2d2"></div>
<div style="left:35px;top:952px;width:2px;height:30px;background:#217346"></div>
<div style="left:0;top:959px;width:36px;text-align:center;font-size:18px;line-height:18px;color:#217346">23</div>
<div style="left:141px;top:293px;width:1px;height:682px;background:#d4d4d4"></div>
<div style="left:229px;top:293px;width:1px;height:682px;background:#d4d4d4"></div>
<div style="left:317px;top:293px;width:1px;height:682px;background:#d4d4d4"></div>
<div style="left:405px;top:293px;width:1px;height:682px;background:#d4d4d4"></div>
<div style="left:499px;top:293px;width:1px;height:682px;background:#d4d4d4"></div>
<div style="left:585px;top:293px;width:1px;height:682px;background:#d4d4d4"></div>
<div style="left:671px;top:293px;width:1px;height:682px;background:#d4d4d4"></div>
<div style="left:797px;top:293px;width:1px;height:682px;background:#d4d4d4"></div>
<div style="left:874px;top:293px;width:1px;height:682px;background:#d4d4d4"></div>
<div style="left:936px;top:293px;width:1px;height:682px;background:#d4d4d4"></div>
<div style="left:1053px;top:293px;width:1px;height:682px;background:#d4d4d4"></div>
<div style="left:1133px;top:293px;width:1px;height:682px;background:#d4d4d4"></div>
<div style="left:1209px;top:293px;width:1px;height:682px;background:#d4d4d4"></div>
<div style="left:1284px;top:293px;width:1px;height:682px;background:#d4d4d4"></div>
<div style="left:1358px;top:293px;width:1px;height:682px;background:#d4d4d4"></div>
<div style="left:1432px;top:293px;width:1px;height:682px;background:#d4d4d4"></div>
<div style="left:1506px;top:293px;width:1px;height:682px;background:#d4d4d4"></div>
<div style="left:1578px;top:293px;width:1px;height:682px;background:#d4d4d4"></div>
<div style="left:1644px;top:293px;width:1px;height:682px;background:#d4d4d4"></div>
<div style="left:1738px;top:293px;width:1px;height:682px;background:#d4d4d4"></div>
<div style="left:1826px;top:293px;width:1px;height:682px;background:#d4d4d4"></div>
<div style="left:1894px;top:293px;width:1px;height:682px;background:#9b9b9b"></div>
<div style="left:37px;top:322px;width:1857px;height:1px;background:#d4d4d4"></div>
<div style="left:37px;top:352px;width:1857px;height:1px;background:#d4d4d4"></div>
<div style="left:37px;top:382px;width:1857px;height:1px;background:#d4d4d4"></div>
<div style="left:37px;top:412px;width:1857px;height:1px;background:#d4d4d4"></div>
<div style="left:37px;top:442px;width:1857px;height:1px;background:#d4d4d4"></div>
<div style="left:37px;top:472px;width:1857px;height:1px;background:#d4d4d4"></div>
<div style="left:37px;top:502px;width:1857px;height:1px;background:#d4d4d4"></div>
<div style="left:37px;top:532px;width:1857px;height:1px;background:#d4d4d4"></div>
<div style="left:37px;top:562px;width:1857px;height:1px;background:#d4d4d4"></div>
<div style="left:37px;top:592px;width:1857px;height:1px;background:#d4d4d4"></div>
<div style="left:37px;top:622px;width:1857px;height:1px;background:#d4d4d4"></div>
<div style="left:37px;top:652px;width:1857px;height:1px;background:#d4d4d4"></div>
<div style="left:37px;top:682px;width:1857px;height:1px;background:#d4d4d4"></div>
<div style="left:37px;top:712px;width:1857px;height:1px;background:#d4d4d4"></div>
<div style="left:37px;top:742px;width:1857px;height:1px;background:#d4d4d4"></div>
<div style="left:37px;top:772px;width:1857px;height:1px;background:#d4d4d4"></div>
<div style="left:37px;top:802px;width:1857px;height:1px;background:#d4d4d4"></div>
<div style="left:37px;top:832px;width:1857px;height:1px;background:#d4d4d4"></div>
<div style="left:37px;top:862px;width:1857px;height:1px;background:#d4d4d4"></div>
<div style="left:37px;top:892px;width:1857px;height:1px;background:#d4d4d4"></div>
<div style="left:37px;top:922px;width:1857px;height:1px;background:#d4d4d4"></div>
<div style="left:37px;top:952px;width:1857px;height:1px;background:#d4d4d4"></div>
<div style="left:37px;top:982px;width:1857px;height:1px;background:#d4d4d4"></div>
<div style="left:797px;top:293px;width:78px;height:30px;background:#ffc7ce"></div>
<div style="left:1209px;top:293px;width:76px;height:30px;background:#c6efce"></div>
<div style="left:1358px;top:293px;width:75px;height:30px;background:#c6efce"></div>
<div style="left:1506px;top:293px;width:73px;height:30px;background:#c6efce"></div>
<div style="left:1644px;top:293px;width:95px;height:30px;background:#c6efce"></div>
<div style="left:499px;top:322px;width:87px;height:31px;background:#a5d9b4"></div>
<div style="left:585px;top:322px;width:87px;height:31px;background:#c3e5ce"></div>
<div style="left:797px;top:322px;width:78px;height:31px;background:#c6efce"></div>
<div style="left:874px;top:322px;width:63px;height:31px;background:#5b9bd5"></div>
<div style="left:1053px;top:322px;width:81px;height:31px;background:#ffeb9c"></div>
<div style="left:1209px;top:322px;width:76px;height:31px;background:#c6efce"></div>
<div style="left:1358px;top:322px;width:75px;height:31px;background:#c6efce"></div>
<div style="left:1506px;top:322px;width:73px;height:31px;background:#ffc7ce"></div>
<div style="left:1578px;top:322px;width:67px;height:31px;background:#ffc000"></div>
<div style="left:1644px;top:322px;width:95px;height:31px;background:#c6efce"></div>
<div style="left:499px;top:352px;width:87px;height:31px;background:#f0f7f5"></div>
<div style="left:585px;top:352px;width:87px;height:31px;background:#f5f9f9"></div>
<div style="left:797px;top:352px;width:78px;height:31px;background:#c6efce"></div>
<div style="left:874px;top:352px;width:63px;height:31px;background:#5b9bd5"></div>
<div style="left:1209px;top:352px;width:76px;height:31px;background:#c6efce"></div>
<div style="left:1358px;top:352px;width:75px;height:31px;background:#c6efce"></div>
<div style="left:1506px;top:352px;width:73px;height:31px;background:#ffc7ce"></div>
<div style="left:1578px;top:352px;width:67px;height:31px;background:#ffc000"></div>
<div style="left:1644px;top:352px;width:95px;height:31px;background:#c6efce"></div>
<div style="left:499px;top:382px;width:87px;height:31px;background:#aadbb9"></div>
<div style="left:585px;top:382px;width:87px;height:31px;background:#c8e7d2"></div>
<div style="left:797px;top:382px;width:78px;height:31px;background:#c6efce"></div>
<div style="left:874px;top:382px;width:63px;height:31px;background:#5b9bd5"></div>
<div style="left:1209px;top:382px;width:76px;height:31px;background:#c6efce"></div>
<div style="left:1358px;top:382px;width:75px;height:31px;background:#ffc7ce"></div>
<div style="left:1506px;top:382px;width:73px;height:31px;background:#ffc7ce"></div>
<div style="left:1578px;top:382px;width:67px;height:31px;background:#ffc000"></div>
<div style="left:1644px;top:382px;width:95px;height:31px;background:#c6efce"></div>
<div style="left:499px;top:412px;width:87px;height:31px;background:#f5f9f9"></div>
<div style="left:585px;top:412px;width:87px;height:31px;background:#f7fafb"></div>
<div style="left:797px;top:412px;width:78px;height:31px;background:#ffc7ce"></div>
<div style="left:1209px;top:412px;width:76px;height:31px;background:#ffc7ce"></div>
<div style="left:1358px;top:412px;width:75px;height:31px;background:#ffc7ce"></div>
<div style="left:1506px;top:412px;width:73px;height:31px;background:#ffc7ce"></div>
<div style="left:1578px;top:412px;width:67px;height:31px;background:#ffc000"></div>
<div style="left:1644px;top:412px;width:95px;height:31px;background:#c6efce"></div>
<div style="left:499px;top:442px;width:87px;height:31px;background:#fbfcfe"></div>
<div style="left:585px;top:442px;width:87px;height:31px;background:#fcfcff"></div>
<div style="left:797px;top:442px;width:78px;height:31px;background:#c6efce"></div>
<div style="left:1209px;top:442px;width:76px;height:31px;background:#ffc7ce"></div>
<div style="left:1358px;top:442px;width:75px;height:31px;background:#ffc7ce"></div>
<div style="left:1506px;top:442px;width:73px;height:31px;background:#ffc7ce"></div>
<div style="left:1578px;top:442px;width:67px;height:31px;background:#ffc000"></div>
<div style="left:1644px;top:442px;width:95px;height:31px;background:#c6efce"></div>
<div style="left:499px;top:472px;width:87px;height:31px;background:#fac4c7"></div>
<div style="left:585px;top:472px;width:87px;height:31px;background:#fbd7da"></div>
<div style="left:797px;top:472px;width:78px;height:31px;background:#ffc7ce"></div>
<div style="left:1209px;top:472px;width:76px;height:31px;background:#ffc7ce"></div>
<div style="left:1358px;top:472px;width:75px;height:31px;background:#ffc7ce"></div>
<div style="left:1506px;top:472px;width:73px;height:31px;background:#ffc7ce"></div>
<div style="left:1578px;top:472px;width:67px;height:31px;background:#ffc000"></div>
<div style="left:1644px;top:472px;width:95px;height:31px;background:#ffc7ce"></div>
<div style="left:499px;top:502px;width:87px;height:31px;background:#e2f2e9"></div>
<div style="left:585px;top:502px;width:87px;height:31px;background:#ebf5f0"></div>
<div style="left:797px;top:502px;width:78px;height:31px;background:#c6efce"></div>
<div style="left:1209px;top:502px;width:76px;height:31px;background:#c6efce"></div>
<div style="left:1358px;top:502px;width:75px;height:31px;background:#ffc7ce"></div>
<div style="left:1506px;top:502px;width:73px;height:31px;background:#ffc7ce"></div>
<div style="left:1578px;top:502px;width:67px;height:31px;background:#ffc000"></div>
<div style="left:1644px;top:502px;width:95px;height:31px;background:#c6efce"></div>
<div style="left:499px;top:532px;width:87px;height:31px;background:#a8dab6"></div>
<div style="left:585px;top:532px;width:87px;height:31px;background:#c6e6d0"></div>
<div style="left:797px;top:532px;width:78px;height:31px;background:#c6efce"></div>
<div style="left:1209px;top:532px;width:76px;height:31px;background:#c6efce"></div>
<div style="left:1358px;top:532px;width:75px;height:31px;background:#ffc7ce"></div>
<div style="left:1506px;top:532px;width:73px;height:31px;background:#ffc7ce"></div>
<div style="left:1578px;top:532px;width:67px;height:31px;background:#ffc000"></div>
<div style="left:1644px;top:532px;width:95px;height:31px;background:#c6efce"></div>
<div style="left:499px;top:562px;width:87px;height:31px;background:#fcecef"></div>
<div style="left:585px;top:562px;width:87px;height:31px;background:#fcf2f4"></div>
<div style="left:797px;top:562px;width:78px;height:31px;background:#ffc7ce"></div>
<div style="left:1209px;top:562px;width:76px;height:31px;background:#ffc7ce"></div>
<div style="left:1358px;top:562px;width:75px;height:31px;background:#ffc7ce"></div>
<div style="left:1506px;top:562px;width:73px;height:31px;background:#ffc7ce"></div>
<div style="left:1578px;top:562px;width:67px;height:31px;background:#ffc000"></div>
<div style="left:1644px;top:562px;width:95px;height:31px;background:#ffc7ce"></div>
<div style="left:499px;top:592px;width:87px;height:31px;background:#e4f2ea"></div>
<div style="left:585px;top:592px;width:87px;height:31px;background:#edf6f2"></div>
<div style="left:797px;top:592px;width:78px;height:31px;background:#c6efce"></div>
<div style="left:1209px;top:592px;width:76px;height:31px;background:#c6efce"></div>
<div style="left:1358px;top:592px;width:75px;height:31px;background:#ffc7ce"></div>
<div style="left:1506px;top:592px;width:73px;height:31px;background:#ffc7ce"></div>
<div style="left:1578px;top:592px;width:67px;height:31px;background:#ffc000"></div>
<div style="left:1644px;top:592px;width:95px;height:31px;background:#c6efce"></div>
<div style="left:499px;top:622px;width:87px;height:31px;background:#e8f4ee"></div>
<div style="left:585px;top:622px;width:87px;height:31px;background:#f0f7f4"></div>
<div style="left:797px;top:622px;width:78px;height:31px;background:#ffc7ce"></div>
<div style="left:874px;top:622px;width:63px;height:31px;background:#ffc000"></div>
<div style="left:1053px;top:622px;width:81px;height:31px;background:#ffeb9c"></div>
<div style="left:1209px;top:622px;width:76px;height:31px;background:#ffc7ce"></div>
<div style="left:1358px;top:622px;width:75px;height:31px;background:#ffc7ce"></div>
<div style="left:1506px;top:622px;width:73px;height:31px;background:#ffc7ce"></div>
<div style="left:1578px;top:622px;width:67px;height:31px;background:#ffc000"></div>
<div style="left:1644px;top:622px;width:95px;height:31px;background:#ffc7ce"></div>
<div style="left:499px;top:652px;width:87px;height:31px;background:#fbe8ea"></div>
<div style="left:585px;top:652px;width:87px;height:31px;background:#fcf0f3"></div>
<div style="left:797px;top:652px;width:78px;height:31px;background:#ffc7ce"></div>
<div style="left:874px;top:652px;width:63px;height:31px;background:#ffc000"></div>
<div style="left:1053px;top:652px;width:81px;height:31px;background:#ffeb9c"></div>
<div style="left:1209px;top:652px;width:76px;height:31px;background:#ffc7ce"></div>
<div style="left:1358px;top:652px;width:75px;height:31px;background:#ffc7ce"></div>
<div style="left:1506px;top:652px;width:73px;height:31px;background:#ffc7ce"></div>
<div style="left:1578px;top:652px;width:67px;height:31px;background:#ffc000"></div>
<div style="left:1644px;top:652px;width:95px;height:31px;background:#ffc7ce"></div>
<div style="left:499px;top:682px;width:87px;height:31px;background:#fcf6f9"></div>
<div style="left:585px;top:682px;width:87px;height:31px;background:#fcf8fb"></div>
<div style="left:797px;top:682px;width:78px;height:31px;background:#ffc7ce"></div>
<div style="left:874px;top:682px;width:63px;height:31px;background:#ffc000"></div>
<div style="left:1053px;top:682px;width:81px;height:31px;background:#ffeb9c"></div>
<div style="left:1209px;top:682px;width:76px;height:31px;background:#ffc7ce"></div>
<div style="left:1358px;top:682px;width:75px;height:31px;background:#ffc7ce"></div>
<div style="left:1506px;top:682px;width:73px;height:31px;background:#ffc7ce"></div>
<div style="left:1578px;top:682px;width:67px;height:31px;background:#ffc000"></div>
<div style="left:1644px;top:682px;width:95px;height:31px;background:#c6efce"></div>
<div style="left:499px;top:712px;width:87px;height:31px;background:#fbdadc"></div>
<div style="left:585px;top:712px;width:87px;height:31px;background:#fbe7ea"></div>
<div style="left:797px;top:712px;width:78px;height:31px;background:#ffc7ce"></div>
<div style="left:874px;top:712px;width:63px;height:31px;background:#ffc000"></div>
<div style="left:1053px;top:712px;width:81px;height:31px;background:#ffeb9c"></div>
<div style="left:1209px;top:712px;width:76px;height:31px;background:#ffc7ce"></div>
<div style="left:1358px;top:712px;width:75px;height:31px;background:#ffc7ce"></div>
<div style="left:1506px;top:712px;width:73px;height:31px;background:#ffc7ce"></div>
<div style="left:1644px;top:712px;width:95px;height:31px;background:#c6efce"></div>
<div style="left:499px;top:742px;width:87px;height:31px;background:#e6f3ec"></div>
<div style="left:585px;top:742px;width:87px;height:31px;background:#edf6f2"></div>
<div style="left:797px;top:742px;width:78px;height:31px;background:#ffc7ce"></div>
<div style="left:874px;top:742px;width:63px;height:31px;background:#ffc000"></div>
<div style="left:1053px;top:742px;width:81px;height:31px;background:#ffeb9c"></div>
<div style="left:1209px;top:742px;width:76px;height:31px;background:#ffc7ce"></div>
<div style="left:1358px;top:742px;width:75px;height:31px;background:#ffc7ce"></div>
<div style="left:1506px;top:742px;width:73px;height:31px;background:#ffc7ce"></div>
<div style="left:1644px;top:742px;width:95px;height:31px;background:#c6efce"></div>
<div style="left:499px;top:772px;width:87px;height:31px;background:#fbe4e6"></div>
<div style="left:585px;top:772px;width:87px;height:31px;background:#fcecef"></div>
<div style="left:797px;top:772px;width:78px;height:31px;background:#ffc7ce"></div>
<div style="left:874px;top:772px;width:63px;height:31px;background:#ffc000"></div>
<div style="left:1053px;top:772px;width:81px;height:31px;background:#ffeb9c"></div>
<div style="left:1209px;top:772px;width:76px;height:31px;background:#ffc7ce"></div>
<div style="left:1358px;top:772px;width:75px;height:31px;background:#ffc7ce"></div>
<div style="left:1506px;top:772px;width:73px;height:31px;background:#ffc7ce"></div>
<div style="left:1644px;top:772px;width:95px;height:31px;background:#c6efce"></div>
<div style="left:499px;top:802px;width:87px;height:31px;background:#fbe4e7"></div>
<div style="left:585px;top:802px;width:87px;height:31px;background:#fcecef"></div>
<div style="left:797px;top:802px;width:78px;height:31px;background:#ffc7ce"></div>
<div style="left:874px;top:802px;width:63px;height:31px;background:#ffc000"></div>
<div style="left:1053px;top:802px;width:81px;height:31px;background:#ffeb9c"></div>
<div style="left:1209px;top:802px;width:76px;height:31px;background:#ffc7ce"></div>
<div style="left:1358px;top:802px;width:75px;height:31px;background:#ffc7ce"></div>
<div style="left:1506px;top:802px;width:73px;height:31px;background:#ffc7ce"></div>
<div style="left:1644px;top:802px;width:95px;height:31px;background:#ffc7ce"></div>
<div style="left:499px;top:832px;width:87px;height:31px;background:#fbcbce"></div>
<div style="left:585px;top:832px;width:87px;height:31px;background:#fbdcdf"></div>
<div style="left:797px;top:832px;width:78px;height:31px;background:#ffc7ce"></div>
<div style="left:874px;top:832px;width:63px;height:31px;background:#ffc000"></div>
<div style="left:1053px;top:832px;width:81px;height:31px;background:#ffeb9c"></div>
<div style="left:1209px;top:832px;width:76px;height:31px;background:#ffc7ce"></div>
<div style="left:1358px;top:832px;width:75px;height:31px;background:#ffc7ce"></div>
<div style="left:1506px;top:832px;width:73px;height:31px;background:#ffc7ce"></div>
<div style="left:1644px;top:832px;width:95px;height:31px;background:#ffc7ce"></div>
<div style="left:499px;top:862px;width:87px;height:31px;background:#fbc6c9"></div>
<div style="left:585px;top:862px;width:87px;height:31px;background:#fbd9dc"></div>
<div style="left:797px;top:862px;width:78px;height:31px;background:#ffc7ce"></div>
<div style="left:874px;top:862px;width:63px;height:31px;background:#ffc000"></div>
<div style="left:1053px;top:862px;width:81px;height:31px;background:#ffeb9c"></div>
<div style="left:1209px;top:862px;width:76px;height:31px;background:#ffc7ce"></div>
<div style="left:1358px;top:862px;width:75px;height:31px;background:#ffc7ce"></div>
<div style="left:1506px;top:862px;width:73px;height:31px;background:#ffc7ce"></div>
<div style="left:1644px;top:862px;width:95px;height:31px;background:#ffc7ce"></div>
<div style="left:499px;top:892px;width:87px;height:31px;background:#fcf4f6"></div>
<div style="left:585px;top:892px;width:87px;height:31px;background:#fcf7fa"></div>
<div style="left:797px;top:892px;width:78px;height:31px;background:#ffc7ce"></div>
<div style="left:874px;top:892px;width:63px;height:31px;background:#ffc000"></div>
<div style="left:1209px;top:892px;width:76px;height:31px;background:#ffc7ce"></div>
<div style="left:1358px;top:892px;width:75px;height:31px;background:#ffc7ce"></div>
<div style="left:1506px;top:892px;width:73px;height:31px;background:#ffc7ce"></div>
<div style="left:1644px;top:892px;width:95px;height:31px;background:#c6efce"></div>
<div style="left:499px;top:922px;width:87px;height:31px;background:#fbdbde"></div>
<div style="left:585px;top:922px;width:87px;height:31px;background:#fbe5e8"></div>
<div style="left:797px;top:922px;width:78px;height:31px;background:#ffc7ce"></div>
<div style="left:874px;top:922px;width:63px;height:31px;background:#ffc000"></div>
<div style="left:1209px;top:922px;width:76px;height:31px;background:#ffc7ce"></div>
<div style="left:1358px;top:922px;width:75px;height:31px;background:#ffc7ce"></div>
<div style="left:1506px;top:922px;width:73px;height:31px;background:#ffc7ce"></div>
<div style="left:1644px;top:922px;width:95px;height:31px;background:#c6efce"></div>
<div style="left:499px;top:952px;width:87px;height:23px;background:#fbe0e3"></div>
<div style="left:585px;top:952px;width:87px;height:23px;background:#fbe9ec"></div>
<div style="left:797px;top:952px;width:78px;height:23px;background:#ffc7ce"></div>
<div style="left:874px;top:952px;width:63px;height:23px;background:#ffc000"></div>
<div style="left:1209px;top:952px;width:76px;height:23px;background:#ffc7ce"></div>
<div style="left:1358px;top:952px;width:75px;height:23px;background:#ffc7ce"></div>
<div style="left:1506px;top:952px;width:73px;height:23px;background:#c6efce"></div>
<div style="left:1644px;top:952px;width:95px;height:23px;background:#ffc7ce"></div>
<svg style="left:1285px;top:323px" width="7" height="7"><path d="M0 0H7L0 7Z" fill="#008000"/></svg>
<svg style="left:1433px;top:323px" width="7" height="7"><path d="M0 0H7L0 7Z" fill="#008000"/></svg>
<svg style="left:1285px;top:353px" width="7" height="7"><path d="M0 0H7L0 7Z" fill="#008000"/></svg>
<svg style="left:1433px;top:353px" width="7" height="7"><path d="M0 0H7L0 7Z" fill="#008000"/></svg>
<svg style="left:1285px;top:383px" width="7" height="7"><path d="M0 0H7L0 7Z" fill="#008000"/></svg>
<svg style="left:1433px;top:383px" width="7" height="7"><path d="M0 0H7L0 7Z" fill="#008000"/></svg>
<svg style="left:1285px;top:413px" width="7" height="7"><path d="M0 0H7L0 7Z" fill="#008000"/></svg>
<svg style="left:1433px;top:413px" width="7" height="7"><path d="M0 0H7L0 7Z" fill="#008000"/></svg>
<svg style="left:1285px;top:443px" width="7" height="7"><path d="M0 0H7L0 7Z" fill="#008000"/></svg>
<svg style="left:1433px;top:443px" width="7" height="7"><path d="M0 0H7L0 7Z" fill="#008000"/></svg>
<svg style="left:1285px;top:473px" width="7" height="7"><path d="M0 0H7L0 7Z" fill="#008000"/></svg>
<svg style="left:1433px;top:473px" width="7" height="7"><path d="M0 0H7L0 7Z" fill="#008000"/></svg>
<svg style="left:1285px;top:503px" width="7" height="7"><path d="M0 0H7L0 7Z" fill="#008000"/></svg>
<svg style="left:1433px;top:503px" width="7" height="7"><path d="M0 0H7L0 7Z" fill="#008000"/></svg>
<svg style="left:1285px;top:533px" width="7" height="7"><path d="M0 0H7L0 7Z" fill="#008000"/></svg>
<svg style="left:1433px;top:533px" width="7" height="7"><path d="M0 0H7L0 7Z" fill="#008000"/></svg>
<svg style="left:1285px;top:563px" width="7" height="7"><path d="M0 0H7L0 7Z" fill="#008000"/></svg>
<svg style="left:1433px;top:563px" width="7" height="7"><path d="M0 0H7L0 7Z" fill="#008000"/></svg>
<svg style="left:1285px;top:593px" width="7" height="7"><path d="M0 0H7L0 7Z" fill="#008000"/></svg>
<svg style="left:1433px;top:593px" width="7" height="7"><path d="M0 0H7L0 7Z" fill="#008000"/></svg>
<svg style="left:1285px;top:623px" width="7" height="7"><path d="M0 0H7L0 7Z" fill="#008000"/></svg>
<svg style="left:1433px;top:623px" width="7" height="7"><path d="M0 0H7L0 7Z" fill="#008000"/></svg>
<svg style="left:1285px;top:653px" width="7" height="7"><path d="M0 0H7L0 7Z" fill="#008000"/></svg>
<svg style="left:1433px;top:653px" width="7" height="7"><path d="M0 0H7L0 7Z" fill="#008000"/></svg>
<svg style="left:1285px;top:683px" width="7" height="7"><path d="M0 0H7L0 7Z" fill="#008000"/></svg>
<svg style="left:1433px;top:683px" width="7" height="7"><path d="M0 0H7L0 7Z" fill="#008000"/></svg>
<svg style="left:1285px;top:713px" width="7" height="7"><path d="M0 0H7L0 7Z" fill="#008000"/></svg>
<svg style="left:1433px;top:713px" width="7" height="7"><path d="M0 0H7L0 7Z" fill="#008000"/></svg>
<svg style="left:1285px;top:743px" width="7" height="7"><path d="M0 0H7L0 7Z" fill="#008000"/></svg>
<svg style="left:1433px;top:743px" width="7" height="7"><path d="M0 0H7L0 7Z" fill="#008000"/></svg>
<svg style="left:1285px;top:773px" width="7" height="7"><path d="M0 0H7L0 7Z" fill="#008000"/></svg>
<svg style="left:1433px;top:773px" width="7" height="7"><path d="M0 0H7L0 7Z" fill="#008000"/></svg>
<svg style="left:1285px;top:803px" width="7" height="7"><path d="M0 0H7L0 7Z" fill="#008000"/></svg>
<svg style="left:1433px;top:803px" width="7" height="7"><path d="M0 0H7L0 7Z" fill="#008000"/></svg>
<svg style="left:1285px;top:833px" width="7" height="7"><path d="M0 0H7L0 7Z" fill="#008000"/></svg>
<svg style="left:1433px;top:833px" width="7" height="7"><path d="M0 0H7L0 7Z" fill="#008000"/></svg>
<svg style="left:1285px;top:863px" width="7" height="7"><path d="M0 0H7L0 7Z" fill="#008000"/></svg>
<svg style="left:1433px;top:863px" width="7" height="7"><path d="M0 0H7L0 7Z" fill="#008000"/></svg>
<svg style="left:1285px;top:893px" width="7" height="7"><path d="M0 0H7L0 7Z" fill="#008000"/></svg>
<svg style="left:1433px;top:893px" width="7" height="7"><path d="M0 0H7L0 7Z" fill="#008000"/></svg>
<svg style="left:1285px;top:923px" width="7" height="7"><path d="M0 0H7L0 7Z" fill="#008000"/></svg>
<svg style="left:1433px;top:923px" width="7" height="7"><path d="M0 0H7L0 7Z" fill="#008000"/></svg>
<svg style="left:1285px;top:953px" width="7" height="7"><path d="M0 0H7L0 7Z" fill="#008000"/></svg>
<svg style="left:1433px;top:953px" width="7" height="7"><path d="M0 0H7L0 7Z" fill="#008000"/></svg>
<div style="left:-4px;width:185px;text-align:center;top:298px;font-size:18px;line-height:18px;color:#262626">本日</div>
<div style="left:101px;width:168px;text-align:center;top:298px;font-size:18px;line-height:18px;color:#262626">始値</div>
<div style="left:189px;width:168px;text-align:center;top:298px;font-size:18px;line-height:18px;color:#262626">高値</div>
<div style="left:277px;width:168px;text-align:center;top:298px;font-size:18px;line-height:18px;color:#262626">安値</div>
<div style="left:365px;width:174px;text-align:center;top:298px;font-size:18px;line-height:18px;color:#262626">終値</div>
<div style="left:459px;width:166px;text-align:center;top:298px;font-size:18px;line-height:18px;color:#262626">前日比</div>
<div style="left:545px;width:166px;text-align:center;top:298px;font-size:18px;line-height:18px;color:#262626">前日比%</div>
<div style="left:631px;width:206px;text-align:center;top:298px;font-size:18px;line-height:18px;color:#262626">売買高(株)</div>
<div style="left:757px;width:157px;text-align:center;top:298px;font-size:18px;line-height:18px;color:#ac1424">陽線陰線</div>
<div style="left:834px;width:142px;text-align:center;top:298px;font-size:18px;line-height:18px;color:#262626">連続数</div>
<div style="left:896px;width:197px;text-align:center;top:298px;font-size:18px;line-height:18px;color:#262626">終値前日比較</div>
<div style="left:1013px;width:160px;text-align:center;top:298px;font-size:18px;line-height:18px;color:#262626">上幅下幅</div>
<div style="left:1137px;top:298px;font-size:18px;line-height:18px;color:#262626">5日比較</div>
<div style="left:1288px;top:298px;font-size:18px;line-height:18px;color:#262626">25日比較</div>
<div style="left:1436px;top:298px;font-size:18px;line-height:18px;color:#262626">60日比</div>
<div style="left:1582px;width:62px;overflow:hidden;top:298px;font-size:18px;line-height:18px;color:#262626">トレンド</div>
<div style="left:1606px;width:174px;text-align:center;top:298px;font-size:18px;line-height:18px;color:#147020">空売り比率</div>
<div style="left:-4px;width:185px;text-align:center;top:329px;font-size:18px;line-height:18px;color:#262626">2021<span style="padding:0 1.5px">/</span>10<span style="padding:0 1.5px">/</span>1</div>
<div style="left:102px;width:168px;text-align:center;top:329px;font-size:18px;line-height:18px;color:#262626">29,235.11</div>
<div style="left:190px;width:168px;text-align:center;top:329px;font-size:18px;line-height:18px;color:#262626">29,393.67</div>
<div style="left:278px;width:168px;text-align:center;top:329px;font-size:18px;line-height:18px;color:#262626">28,680.73</div>
<div style="left:366px;width:174px;text-align:center;top:329px;font-size:18px;line-height:18px;color:#262626">28,771.07</div>
<div style="left:459px;width:166px;text-align:center;top:329px;font-size:18px;line-height:18px;color:#262626">-681.59</div>
<div style="left:545px;width:166px;text-align:center;top:329px;font-size:18px;line-height:18px;color:#262626">-2.3</div>
<div style="left:632px;width:206px;text-align:center;top:329px;font-size:18px;line-height:18px;color:#262626">1,384,430,000</div>
<div style="left:757px;width:157px;text-align:center;top:329px;font-size:18px;line-height:18px;color:#147020">陰</div>
<div style="left:835px;width:142px;text-align:center;top:329px;font-size:18px;line-height:18px;color:#262626">3</div>
<div style="left:936px;width:114px;text-align:right;top:329px;font-size:18px;line-height:18px;color:#262626">-1412.89</div>
<div style="left:1013px;width:160px;text-align:center;top:329px;font-size:18px;line-height:18px;color:#9c5700">千</div>
<div style="left:1133px;width:73px;text-align:right;top:329px;font-size:18px;line-height:18px;color:#262626">29638</div>
<div style="left:1209px;width:72px;text-align:right;top:329px;font-size:18px;line-height:18px;color:#147020">0.9707</div>
<div style="left:1284px;width:71px;text-align:right;top:329px;font-size:18px;line-height:18px;color:#262626">29516</div>
<div style="left:1358px;width:71px;text-align:right;top:329px;font-size:18px;line-height:18px;color:#147020">0.9748</div>
<div style="left:1432px;width:71px;text-align:right;top:329px;font-size:18px;line-height:18px;color:#262626">28551</div>
<div style="left:1506px;width:69px;text-align:right;top:329px;font-size:18px;line-height:18px;color:#ac1424">1.0077</div>
<div style="left:1582px;top:329px;font-size:18px;line-height:18px;color:#262626">上昇</div>
<div style="left:1644px;width:91px;text-align:right;top:329px;font-size:18px;line-height:18px;color:#147020">48.1</div>
<div style="left:-4px;width:185px;text-align:center;top:359px;font-size:18px;line-height:18px;color:#262626">2021<span style="padding:0 1.5px">/</span>9<span style="padding:0 1.5px">/</span>30</div>
<div style="left:102px;width:168px;text-align:center;top:359px;font-size:18px;line-height:18px;color:#262626">29,569.19</div>
<div style="left:190px;width:168px;text-align:center;top:359px;font-size:18px;line-height:18px;color:#262626">29,622.27</div>
<div style="left:278px;width:168px;text-align:center;top:359px;font-size:18px;line-height:18px;color:#262626">29,311.34</div>
<div style="left:366px;width:174px;text-align:center;top:359px;font-size:18px;line-height:18px;color:#262626">29,452.66</div>
<div style="left:459px;width:166px;text-align:center;top:359px;font-size:18px;line-height:18px;color:#262626">-91.63</div>
<div style="left:545px;width:166px;text-align:center;top:359px;font-size:18px;line-height:18px;color:#262626">-0.3</div>
<div style="left:632px;width:206px;text-align:center;top:359px;font-size:18px;line-height:18px;color:#262626">1,551,250,000</div>
<div style="left:757px;width:157px;text-align:center;top:359px;font-size:18px;line-height:18px;color:#147020">陰</div>
<div style="left:835px;width:142px;text-align:center;top:359px;font-size:18px;line-height:18px;color:#262626">2</div>
<div style="left:936px;width:114px;text-align:right;top:359px;font-size:18px;line-height:18px;color:#262626">-731.3</div>
<div style="left:1133px;width:73px;text-align:right;top:359px;font-size:18px;line-height:18px;color:#262626">29934</div>
<div style="left:1209px;width:72px;text-align:right;top:359px;font-size:18px;line-height:18px;color:#147020">0.9839</div>
<div style="left:1284px;width:71px;text-align:right;top:359px;font-size:18px;line-height:18px;color:#262626">29474</div>
<div style="left:1358px;width:71px;text-align:right;top:359px;font-size:18px;line-height:18px;color:#147020">0.9993</div>
<div style="left:1432px;width:71px;text-align:right;top:359px;font-size:18px;line-height:18px;color:#262626">28551</div>
<div style="left:1506px;width:69px;text-align:right;top:359px;font-size:18px;line-height:18px;color:#ac1424">1.0316</div>
<div style="left:1582px;top:359px;font-size:18px;line-height:18px;color:#262626">上昇</div>
<div style="left:1644px;width:91px;text-align:right;top:359px;font-size:18px;line-height:18px;color:#147020">46.4</div>
<div style="left:-4px;width:185px;text-align:center;top:389px;font-size:18px;line-height:18px;color:#262626">2021<span style="padding:0 1.5px">/</span>9<span style="padding:0 1.5px">/</span>29</div>
<div style="left:102px;width:168px;text-align:center;top:389px;font-size:18px;line-height:18px;color:#262626">29,611.92</div>
<div style="left:190px;width:168px;text-align:center;top:389px;font-size:18px;line-height:18px;color:#262626">29,679.26</div>
<div style="left:278px;width:168px;text-align:center;top:389px;font-size:18px;line-height:18px;color:#262626">29,329.16</div>
<div style="left:366px;width:174px;text-align:center;top:389px;font-size:18px;line-height:18px;color:#262626">29,544.29</div>
<div style="left:459px;width:166px;text-align:center;top:389px;font-size:18px;line-height:18px;color:#262626">-639.67</div>
<div style="left:545px;width:166px;text-align:center;top:389px;font-size:18px;line-height:18px;color:#262626">-2.1</div>
<div style="left:632px;width:206px;text-align:center;top:389px;font-size:18px;line-height:18px;color:#262626">1,602,590,000</div>
<div style="left:757px;width:157px;text-align:center;top:389px;font-size:18px;line-height:18px;color:#147020">陰</div>
<div style="left:835px;width:142px;text-align:center;top:389px;font-size:18px;line-height:18px;color:#262626">1</div>
<div style="left:936px;width:114px;text-align:right;top:389px;font-size:18px;line-height:18px;color:#262626">-639.67</div>
<div style="left:1133px;width:73px;text-align:right;top:389px;font-size:18px;line-height:18px;color:#262626">29971</div>
<div style="left:1209px;width:72px;text-align:right;top:389px;font-size:18px;line-height:18px;color:#147020">0.9858</div>
<div style="left:1284px;width:71px;text-align:right;top:389px;font-size:18px;line-height:18px;color:#262626">29406</div>
<div style="left:1358px;width:71px;text-align:right;top:389px;font-size:18px;line-height:18px;color:#ac1424">1.0047</div>
<div style="left:1432px;width:71px;text-align:right;top:389px;font-size:18px;line-height:18px;color:#262626">28539</div>
<div style="left:1506px;width:69px;text-align:right;top:389px;font-size:18px;line-height:18px;color:#ac1424">1.0352</div>
<div style="left:1582px;top:389px;font-size:18px;line-height:18px;color:#262626">上昇</div>
<div style="left:1644px;width:91px;text-align:right;top:389px;font-size:18px;line-height:18px;color:#147020">44.7</div>
<div style="left:-4px;width:185px;text-align:center;top:419px;font-size:18px;line-height:18px;color:#262626">2021<span style="padding:0 1.5px">/</span>9<span style="padding:0 1.5px">/</span>28</div>
<div style="left:102px;width:168px;text-align:center;top:419px;font-size:18px;line-height:18px;color:#262626">30,142.38</div>
<div style="left:190px;width:168px;text-align:center;top:419px;font-size:18px;line-height:18px;color:#262626">30,207.63</div>
<div style="left:278px;width:168px;text-align:center;top:419px;font-size:18px;line-height:18px;color:#262626">30,001.99</div>
<div style="left:366px;width:174px;text-align:center;top:419px;font-size:18px;line-height:18px;color:#262626">30,183.96</div>
<div style="left:459px;width:166px;text-align:center;top:419px;font-size:18px;line-height:18px;color:#262626">-56.1</div>
<div style="left:545px;width:166px;text-align:center;top:419px;font-size:18px;line-height:18px;color:#262626">-0.2</div>
<div style="left:632px;width:206px;text-align:center;top:419px;font-size:18px;line-height:18px;color:#262626">1,506,770,000</div>
<div style="left:757px;width:157px;text-align:center;top:419px;font-size:18px;line-height:18px;color:#ac1424">陽</div>
<div style="left:835px;width:142px;text-align:center;top:419px;font-size:18px;line-height:18px;color:#262626">1</div>
<div style="left:936px;width:114px;text-align:right;top:419px;font-size:18px;line-height:18px;color:#262626">-56.1</div>
<div style="left:1133px;width:73px;text-align:right;top:419px;font-size:18px;line-height:18px;color:#262626">30030</div>
<div style="left:1209px;width:72px;text-align:right;top:419px;font-size:18px;line-height:18px;color:#ac1424">1.0051</div>
<div style="left:1284px;width:71px;text-align:right;top:419px;font-size:18px;line-height:18px;color:#262626">29324</div>
<div style="left:1358px;width:71px;text-align:right;top:419px;font-size:18px;line-height:18px;color:#ac1424">1.0293</div>
<div style="left:1432px;width:71px;text-align:right;top:419px;font-size:18px;line-height:18px;color:#262626">28526</div>
<div style="left:1506px;width:69px;text-align:right;top:419px;font-size:18px;line-height:18px;color:#ac1424">1.0581</div>
<div style="left:1582px;top:419px;font-size:18px;line-height:18px;color:#262626">上昇</div>
<div style="left:1644px;width:91px;text-align:right;top:419px;font-size:18px;line-height:18px;color:#147020">43.3</div>
<div style="left:-4px;width:185px;text-align:center;top:449px;font-size:18px;line-height:18px;color:#262626">2021<span style="padding:0 1.5px">/</span>9<span style="padding:0 1.5px">/</span>27</div>
<div style="left:102px;width:168px;text-align:center;top:449px;font-size:18px;line-height:18px;color:#262626">30,277.82</div>
<div style="left:190px;width:168px;text-align:center;top:449px;font-size:18px;line-height:18px;color:#262626">30,414.61</div>
<div style="left:278px;width:168px;text-align:center;top:449px;font-size:18px;line-height:18px;color:#262626">30,197.40</div>
<div style="left:366px;width:174px;text-align:center;top:449px;font-size:18px;line-height:18px;color:#262626">30,240.06</div>
<div style="left:459px;width:166px;text-align:center;top:449px;font-size:18px;line-height:18px;color:#262626">-8.75</div>
<div style="left:545px;width:166px;text-align:center;top:449px;font-size:18px;line-height:18px;color:#262626">0</div>
<div style="left:632px;width:206px;text-align:center;top:449px;font-size:18px;line-height:18px;color:#262626">1,293,466,000</div>
<div style="left:757px;width:157px;text-align:center;top:449px;font-size:18px;line-height:18px;color:#147020">陰</div>
<div style="left:835px;width:142px;text-align:center;top:449px;font-size:18px;line-height:18px;color:#262626">1</div>
<div style="left:936px;width:114px;text-align:right;top:449px;font-size:18px;line-height:18px;color:#262626">-8.75</div>
<div style="left:1133px;width:73px;text-align:right;top:449px;font-size:18px;line-height:18px;color:#262626">30094</div>
<div style="left:1209px;width:72px;text-align:right;top:449px;font-size:18px;line-height:18px;color:#ac1424">1.0049</div>
<div style="left:1284px;width:71px;text-align:right;top:449px;font-size:18px;line-height:18px;color:#262626">29197</div>
<div style="left:1358px;width:71px;text-align:right;top:449px;font-size:18px;line-height:18px;color:#ac1424">1.0357</div>
<div style="left:1432px;width:71px;text-align:right;top:449px;font-size:18px;line-height:18px;color:#262626">28503</div>
<div style="left:1506px;width:69px;text-align:right;top:449px;font-size:18px;line-height:18px;color:#ac1424">1.0609</div>
<div style="left:1582px;top:449px;font-size:18px;line-height:18px;color:#262626">上昇</div>
<div style="left:1644px;width:91px;text-align:right;top:449px;font-size:18px;line-height:18px;color:#147020">41.1</div>
<div style="left:-4px;width:185px;text-align:center;top:479px;font-size:18px;line-height:18px;color:#262626">2021<span style="padding:0 1.5px">/</span>9<span style="padding:0 1.5px">/</span>24</div>
<div style="left:102px;width:168px;text-align:center;top:479px;font-size:18px;line-height:18px;color:#262626">30,141.61</div>
<div style="left:190px;width:168px;text-align:center;top:479px;font-size:18px;line-height:18px;color:#262626">30,276.38</div>
<div style="left:278px;width:168px;text-align:center;top:479px;font-size:18px;line-height:18px;color:#262626">30,110.30</div>
<div style="left:366px;width:174px;text-align:center;top:479px;font-size:18px;line-height:18px;color:#262626">30,248.81</div>
<div style="left:459px;width:166px;text-align:center;top:479px;font-size:18px;line-height:18px;color:#262626">609.41</div>
<div style="left:545px;width:166px;text-align:center;top:479px;font-size:18px;line-height:18px;color:#262626">2.1</div>
<div style="left:632px;width:206px;text-align:center;top:479px;font-size:18px;line-height:18px;color:#262626">1,425,370,000</div>
<div style="left:757px;width:157px;text-align:center;top:479px;font-size:18px;line-height:18px;color:#ac1424">陽</div>
<div style="left:835px;width:142px;text-align:center;top:479px;font-size:18px;line-height:18px;color:#262626">1</div>
<div style="left:936px;width:114px;text-align:right;top:479px;font-size:18px;line-height:18px;color:#262626">609.41</div>
<div style="left:1133px;width:73px;text-align:right;top:479px;font-size:18px;line-height:18px;color:#262626">30110</div>
<div style="left:1209px;width:72px;text-align:right;top:479px;font-size:18px;line-height:18px;color:#ac1424">1.0046</div>
<div style="left:1284px;width:71px;text-align:right;top:479px;font-size:18px;line-height:18px;color:#262626">29078</div>
<div style="left:1358px;width:71px;text-align:right;top:479px;font-size:18px;line-height:18px;color:#ac1424">1.0403</div>
<div style="left:1432px;width:71px;text-align:right;top:479px;font-size:18px;line-height:18px;color:#262626">28484</div>
<div style="left:1506px;width:69px;text-align:right;top:479px;font-size:18px;line-height:18px;color:#ac1424">1.062</div>
<div style="left:1582px;top:479px;font-size:18px;line-height:18px;color:#262626">上昇</div>
<div style="left:1644px;width:91px;text-align:right;top:479px;font-size:18px;line-height:18px;color:#ac1424">38</div>
<div style="left:-4px;width:185px;text-align:center;top:509px;font-size:18px;line-height:18px;color:#262626">2021<span style="padding:0 1.5px">/</span>9<span style="padding:0 1.5px">/</span>22</div>
<div style="left:102px;width:168px;text-align:center;top:509px;font-size:18px;line-height:18px;color:#262626">29,744.73</div>
<div style="left:190px;width:168px;text-align:center;top:509px;font-size:18px;line-height:18px;color:#262626">29,868.10</div>
<div style="left:278px;width:168px;text-align:center;top:509px;font-size:18px;line-height:18px;color:#262626">29,573.88</div>
<div style="left:366px;width:174px;text-align:center;top:509px;font-size:18px;line-height:18px;color:#262626">29,639.40</div>
<div style="left:459px;width:166px;text-align:center;top:509px;font-size:18px;line-height:18px;color:#262626">-200.31</div>
<div style="left:545px;width:166px;text-align:center;top:509px;font-size:18px;line-height:18px;color:#262626">-0.7</div>
<div style="left:632px;width:206px;text-align:center;top:509px;font-size:18px;line-height:18px;color:#262626">1,203,590,000</div>
<div style="left:757px;width:157px;text-align:center;top:509px;font-size:18px;line-height:18px;color:#147020">陰</div>
<div style="left:835px;width:142px;text-align:center;top:509px;font-size:18px;line-height:18px;color:#262626">2</div>
<div style="left:936px;width:114px;text-align:right;top:509px;font-size:18px;line-height:18px;color:#262626">-860.65</div>
<div style="left:1133px;width:73px;text-align:right;top:509px;font-size:18px;line-height:18px;color:#262626">30163</div>
<div style="left:1209px;width:72px;text-align:right;top:509px;font-size:18px;line-height:18px;color:#147020">0.9826</div>
<div style="left:1284px;width:71px;text-align:right;top:509px;font-size:18px;line-height:18px;color:#262626">28972</div>
<div style="left:1358px;width:71px;text-align:right;top:509px;font-size:18px;line-height:18px;color:#ac1424">1.023</div>
<div style="left:1432px;width:71px;text-align:right;top:509px;font-size:18px;line-height:18px;color:#262626">28464</div>
<div style="left:1506px;width:69px;text-align:right;top:509px;font-size:18px;line-height:18px;color:#ac1424">1.0413</div>
<div style="left:1582px;top:509px;font-size:18px;line-height:18px;color:#262626">上昇</div>
<div style="left:1644px;width:91px;text-align:right;top:509px;font-size:18px;line-height:18px;color:#147020">43.1</div>
<div style="left:-4px;width:185px;text-align:center;top:539px;font-size:18px;line-height:18px;color:#262626">2021<span style="padding:0 1.5px">/</span>9<span style="padding:0 1.5px">/</span>21</div>
<div style="left:102px;width:168px;text-align:center;top:539px;font-size:18px;line-height:18px;color:#262626">30,021.25</div>
<div style="left:190px;width:168px;text-align:center;top:539px;font-size:18px;line-height:18px;color:#262626">30,051.00</div>
<div style="left:278px;width:168px;text-align:center;top:539px;font-size:18px;line-height:18px;color:#262626">29,832.52</div>
<div style="left:366px;width:174px;text-align:center;top:539px;font-size:18px;line-height:18px;color:#262626">29,839.71</div>
<div style="left:459px;width:166px;text-align:center;top:539px;font-size:18px;line-height:18px;color:#262626">-660.34</div>
<div style="left:545px;width:166px;text-align:center;top:539px;font-size:18px;line-height:18px;color:#262626">-2.2</div>
<div style="left:632px;width:206px;text-align:center;top:539px;font-size:18px;line-height:18px;color:#262626">1,319,880,000</div>
<div style="left:757px;width:157px;text-align:center;top:539px;font-size:18px;line-height:18px;color:#147020">陰</div>
<div style="left:835px;width:142px;text-align:center;top:539px;font-size:18px;line-height:18px;color:#262626">1</div>
<div style="left:936px;width:114px;text-align:right;top:539px;font-size:18px;line-height:18px;color:#262626">-660.34</div>
<div style="left:1133px;width:73px;text-align:right;top:539px;font-size:18px;line-height:18px;color:#262626">30369</div>
<div style="left:1209px;width:72px;text-align:right;top:539px;font-size:18px;line-height:18px;color:#147020">0.9826</div>
<div style="left:1284px;width:71px;text-align:right;top:539px;font-size:18px;line-height:18px;color:#262626">28883</div>
<div style="left:1358px;width:71px;text-align:right;top:539px;font-size:18px;line-height:18px;color:#ac1424">1.0331</div>
<div style="left:1432px;width:71px;text-align:right;top:539px;font-size:18px;line-height:18px;color:#262626">28451</div>
<div style="left:1506px;width:69px;text-align:right;top:539px;font-size:18px;line-height:18px;color:#ac1424">1.0488</div>
<div style="left:1582px;top:539px;font-size:18px;line-height:18px;color:#262626">上昇</div>
<div style="left:1644px;width:91px;text-align:right;top:539px;font-size:18px;line-height:18px;color:#147020">41.4</div>
<div style="left:-4px;width:185px;text-align:center;top:569px;font-size:18px;line-height:18px;color:#262626">2021<span style="padding:0 1.5px">/</span>9<span style="padding:0 1.5px">/</span>17</div>
<div style="left:102px;width:168px;text-align:center;top:569px;font-size:18px;line-height:18px;color:#262626">30,387.54</div>
<div style="left:190px;width:168px;text-align:center;top:569px;font-size:18px;line-height:18px;color:#262626">30,541.99</div>
<div style="left:278px;width:168px;text-align:center;top:569px;font-size:18px;line-height:18px;color:#262626">30,358.93</div>
<div style="left:366px;width:174px;text-align:center;top:569px;font-size:18px;line-height:18px;color:#262626">30,500.05</div>
<div style="left:459px;width:166px;text-align:center;top:569px;font-size:18px;line-height:18px;color:#262626">176.71</div>
<div style="left:545px;width:166px;text-align:center;top:569px;font-size:18px;line-height:18px;color:#262626">0.6</div>
<div style="left:632px;width:206px;text-align:center;top:569px;font-size:18px;line-height:18px;color:#262626">1,060,936,800</div>
<div style="left:757px;width:157px;text-align:center;top:569px;font-size:18px;line-height:18px;color:#ac1424">陽</div>
<div style="left:835px;width:142px;text-align:center;top:569px;font-size:18px;line-height:18px;color:#262626">1</div>
<div style="left:936px;width:114px;text-align:right;top:569px;font-size:18px;line-height:18px;color:#262626">176.71</div>
<div style="left:1133px;width:73px;text-align:right;top:569px;font-size:18px;line-height:18px;color:#262626">30491</div>
<div style="left:1209px;width:72px;text-align:right;top:569px;font-size:18px;line-height:18px;color:#ac1424">1.0003</div>
<div style="left:1284px;width:71px;text-align:right;top:569px;font-size:18px;line-height:18px;color:#262626">28790</div>
<div style="left:1358px;width:71px;text-align:right;top:569px;font-size:18px;line-height:18px;color:#ac1424">1.0594</div>
<div style="left:1432px;width:71px;text-align:right;top:569px;font-size:18px;line-height:18px;color:#262626">28435</div>
<div style="left:1506px;width:69px;text-align:right;top:569px;font-size:18px;line-height:18px;color:#ac1424">1.0726</div>
<div style="left:1582px;top:569px;font-size:18px;line-height:18px;color:#262626">上昇</div>
<div style="left:1644px;width:91px;text-align:right;top:569px;font-size:18px;line-height:18px;color:#ac1424">39.3</div>
<div style="left:-4px;width:185px;text-align:center;top:599px;font-size:18px;line-height:18px;color:#262626">2021<span style="padding:0 1.5px">/</span>9<span style="padding:0 1.5px">/</span>16</div>
<div style="left:102px;width:168px;text-align:center;top:599px;font-size:18px;line-height:18px;color:#262626">30,606.15</div>
<div style="left:190px;width:168px;text-align:center;top:599px;font-size:18px;line-height:18px;color:#262626">30,622.39</div>
<div style="left:278px;width:168px;text-align:center;top:599px;font-size:18px;line-height:18px;color:#262626">30,202.51</div>
<div style="left:366px;width:174px;text-align:center;top:599px;font-size:18px;line-height:18px;color:#262626">30,323.34</div>
<div style="left:459px;width:166px;text-align:center;top:599px;font-size:18px;line-height:18px;color:#262626">-188.37</div>
<div style="left:545px;width:166px;text-align:center;top:599px;font-size:18px;line-height:18px;color:#262626">-0.6</div>
<div style="left:632px;width:206px;text-align:center;top:599px;font-size:18px;line-height:18px;color:#262626">1,093,150,400</div>
<div style="left:757px;width:157px;text-align:center;top:599px;font-size:18px;line-height:18px;color:#147020">陰</div>
<div style="left:835px;width:142px;text-align:center;top:599px;font-size:18px;line-height:18px;color:#262626">1</div>
<div style="left:936px;width:114px;text-align:right;top:599px;font-size:18px;line-height:18px;color:#262626">-188.37</div>
<div style="left:1133px;width:73px;text-align:right;top:599px;font-size:18px;line-height:18px;color:#262626">30467</div>
<div style="left:1209px;width:72px;text-align:right;top:599px;font-size:18px;line-height:18px;color:#147020">0.9953</div>
<div style="left:1284px;width:71px;text-align:right;top:599px;font-size:18px;line-height:18px;color:#262626">28689</div>
<div style="left:1358px;width:71px;text-align:right;top:599px;font-size:18px;line-height:18px;color:#ac1424">1.057</div>
<div style="left:1432px;width:71px;text-align:right;top:599px;font-size:18px;line-height:18px;color:#262626">28408</div>
<div style="left:1506px;width:69px;text-align:right;top:599px;font-size:18px;line-height:18px;color:#ac1424">1.0674</div>
<div style="left:1582px;top:599px;font-size:18px;line-height:18px;color:#262626">上昇</div>
<div style="left:1644px;width:91px;text-align:right;top:599px;font-size:18px;line-height:18px;color:#147020">42.1</div>
<div style="left:-4px;width:185px;text-align:center;top:629px;font-size:18px;line-height:18px;color:#262626">2021<span style="padding:0 1.5px">/</span>9<span style="padding:0 1.5px">/</span>15</div>
<div style="left:102px;width:168px;text-align:center;top:629px;font-size:18px;line-height:18px;color:#262626">30,464.17</div>
<div style="left:190px;width:168px;text-align:center;top:629px;font-size:18px;line-height:18px;color:#262626">30,573.41</div>
<div style="left:278px;width:168px;text-align:center;top:629px;font-size:18px;line-height:18px;color:#262626">30,347.30</div>
<div style="left:366px;width:174px;text-align:center;top:629px;font-size:18px;line-height:18px;color:#262626">30,511.71</div>
<div style="left:459px;width:166px;text-align:center;top:629px;font-size:18px;line-height:18px;color:#262626">-158.39</div>
<div style="left:545px;width:166px;text-align:center;top:629px;font-size:18px;line-height:18px;color:#262626">-0.5</div>
<div style="left:632px;width:206px;text-align:center;top:629px;font-size:18px;line-height:18px;color:#262626">1,047,061,700</div>
<div style="left:757px;width:157px;text-align:center;top:629px;font-size:18px;line-height:18px;color:#ac1424">陽</div>
<div style="left:835px;width:142px;text-align:center;top:629px;font-size:18px;line-height:18px;color:#262626">12</div>
<div style="left:936px;width:114px;text-align:right;top:629px;font-size:18px;line-height:18px;color:#262626">2722.42</div>
<div style="left:1013px;width:160px;text-align:center;top:629px;font-size:18px;line-height:18px;color:#9c5700">千</div>
<div style="left:1133px;width:73px;text-align:right;top:629px;font-size:18px;line-height:18px;color:#262626">30404</div>
<div style="left:1209px;width:72px;text-align:right;top:629px;font-size:18px;line-height:18px;color:#ac1424">1.0035</div>
<div style="left:1284px;width:71px;text-align:right;top:629px;font-size:18px;line-height:18px;color:#262626">28597</div>
<div style="left:1358px;width:71px;text-align:right;top:629px;font-size:18px;line-height:18px;color:#ac1424">1.0669</div>
<div style="left:1432px;width:71px;text-align:right;top:629px;font-size:18px;line-height:18px;color:#262626">28370</div>
<div style="left:1506px;width:69px;text-align:right;top:629px;font-size:18px;line-height:18px;color:#ac1424">1.0755</div>
<div style="left:1582px;top:629px;font-size:18px;line-height:18px;color:#262626">上昇</div>
<div style="left:1644px;width:91px;text-align:right;top:629px;font-size:18px;line-height:18px;color:#ac1424">39.3</div>
<div style="left:-4px;width:185px;text-align:center;top:659px;font-size:18px;line-height:18px;color:#262626">2021<span style="padding:0 1.5px">/</span>9<span style="padding:0 1.5px">/</span>14</div>
<div style="left:102px;width:168px;text-align:center;top:659px;font-size:18px;line-height:18px;color:#262626">30,584.77</div>
<div style="left:190px;width:168px;text-align:center;top:659px;font-size:18px;line-height:18px;color:#262626">30,795.78</div>
<div style="left:278px;width:168px;text-align:center;top:659px;font-size:18px;line-height:18px;color:#262626">30,504.81</div>
<div style="left:366px;width:174px;text-align:center;top:659px;font-size:18px;line-height:18px;color:#262626">30,670.10</div>
<div style="left:459px;width:166px;text-align:center;top:659px;font-size:18px;line-height:18px;color:#262626">222.73</div>
<div style="left:545px;width:166px;text-align:center;top:659px;font-size:18px;line-height:18px;color:#262626">0.7</div>
<div style="left:632px;width:206px;text-align:center;top:659px;font-size:18px;line-height:18px;color:#262626">1,144,580,700</div>
<div style="left:757px;width:157px;text-align:center;top:659px;font-size:18px;line-height:18px;color:#ac1424">陽</div>
<div style="left:835px;width:142px;text-align:center;top:659px;font-size:18px;line-height:18px;color:#262626">11</div>
<div style="left:936px;width:114px;text-align:right;top:659px;font-size:18px;line-height:18px;color:#262626">2880.81</div>
<div style="left:1013px;width:160px;text-align:center;top:659px;font-size:18px;line-height:18px;color:#9c5700">千</div>
<div style="left:1133px;width:73px;text-align:right;top:659px;font-size:18px;line-height:18px;color:#262626">30338</div>
<div style="left:1209px;width:72px;text-align:right;top:659px;font-size:18px;line-height:18px;color:#ac1424">1.011</div>
<div style="left:1284px;width:71px;text-align:right;top:659px;font-size:18px;line-height:18px;color:#262626">28499</div>
<div style="left:1358px;width:71px;text-align:right;top:659px;font-size:18px;line-height:18px;color:#ac1424">1.0762</div>
<div style="left:1432px;width:71px;text-align:right;top:659px;font-size:18px;line-height:18px;color:#262626">28344</div>
<div style="left:1506px;width:69px;text-align:right;top:659px;font-size:18px;line-height:18px;color:#ac1424">1.0821</div>
<div style="left:1582px;top:659px;font-size:18px;line-height:18px;color:#262626">上昇</div>
<div style="left:1644px;width:91px;text-align:right;top:659px;font-size:18px;line-height:18px;color:#ac1424">38</div>
<div style="left:-4px;width:185px;text-align:center;top:689px;font-size:18px;line-height:18px;color:#262626">2021<span style="padding:0 1.5px">/</span>9<span style="padding:0 1.5px">/</span>13</div>
<div style="left:102px;width:168px;text-align:center;top:689px;font-size:18px;line-height:18px;color:#262626">30,372.02</div>
<div style="left:190px;width:168px;text-align:center;top:689px;font-size:18px;line-height:18px;color:#262626">30,447.37</div>
<div style="left:278px;width:168px;text-align:center;top:689px;font-size:18px;line-height:18px;color:#262626">30,229.01</div>
<div style="left:366px;width:174px;text-align:center;top:689px;font-size:18px;line-height:18px;color:#262626">30,447.37</div>
<div style="left:459px;width:166px;text-align:center;top:689px;font-size:18px;line-height:18px;color:#262626">65.53</div>
<div style="left:545px;width:166px;text-align:center;top:689px;font-size:18px;line-height:18px;color:#262626">0.2</div>
<div style="left:632px;width:206px;text-align:center;top:689px;font-size:18px;line-height:18px;color:#262626">990,996,600</div>
<div style="left:757px;width:157px;text-align:center;top:689px;font-size:18px;line-height:18px;color:#ac1424">陽</div>
<div style="left:835px;width:142px;text-align:center;top:689px;font-size:18px;line-height:18px;color:#262626">10</div>
<div style="left:936px;width:114px;text-align:right;top:689px;font-size:18px;line-height:18px;color:#262626">2658.08</div>
<div style="left:1013px;width:160px;text-align:center;top:689px;font-size:18px;line-height:18px;color:#9c5700">千</div>
<div style="left:1133px;width:73px;text-align:right;top:689px;font-size:18px;line-height:18px;color:#262626">30187</div>
<div style="left:1209px;width:72px;text-align:right;top:689px;font-size:18px;line-height:18px;color:#ac1424">1.0086</div>
<div style="left:1284px;width:71px;text-align:right;top:689px;font-size:18px;line-height:18px;color:#262626">28388</div>
<div style="left:1358px;width:71px;text-align:right;top:689px;font-size:18px;line-height:18px;color:#ac1424">1.0725</div>
<div style="left:1432px;width:71px;text-align:right;top:689px;font-size:18px;line-height:18px;color:#262626">28316</div>
<div style="left:1506px;width:69px;text-align:right;top:689px;font-size:18px;line-height:18px;color:#ac1424">1.0753</div>
<div style="left:1582px;top:689px;font-size:18px;line-height:18px;color:#262626">上昇</div>
<div style="left:1644px;width:91px;text-align:right;top:689px;font-size:18px;line-height:18px;color:#147020">40.6</div>
<div style="left:-4px;width:185px;text-align:center;top:719px;font-size:18px;line-height:18px;color:#262626">2021<span style="padding:0 1.5px">/</span>9<span style="padding:0 1.5px">/</span>10</div>
<div style="left:102px;width:168px;text-align:center;top:719px;font-size:18px;line-height:18px;color:#262626">30,089.45</div>
<div style="left:190px;width:168px;text-align:center;top:719px;font-size:18px;line-height:18px;color:#262626">30,381.84</div>
<div style="left:278px;width:168px;text-align:center;top:719px;font-size:18px;line-height:18px;color:#262626">30,064.02</div>
<div style="left:366px;width:174px;text-align:center;top:719px;font-size:18px;line-height:18px;color:#262626">30,381.84</div>
<div style="left:459px;width:166px;text-align:center;top:719px;font-size:18px;line-height:18px;color:#262626">373.65</div>
<div style="left:545px;width:166px;text-align:center;top:719px;font-size:18px;line-height:18px;color:#262626">1.2</div>
<div style="left:632px;width:206px;text-align:center;top:719px;font-size:18px;line-height:18px;color:#262626">1,291,034,100</div>
<div style="left:757px;width:157px;text-align:center;top:719px;font-size:18px;line-height:18px;color:#ac1424">陽</div>
<div style="left:835px;width:142px;text-align:center;top:719px;font-size:18px;line-height:18px;color:#262626">9</div>
<div style="left:936px;width:114px;text-align:right;top:719px;font-size:18px;line-height:18px;color:#262626">2592.55</div>
<div style="left:1013px;width:160px;text-align:center;top:719px;font-size:18px;line-height:18px;color:#9c5700">千</div>
<div style="left:1133px;width:73px;text-align:right;top:719px;font-size:18px;line-height:18px;color:#262626">30029</div>
<div style="left:1209px;width:72px;text-align:right;top:719px;font-size:18px;line-height:18px;color:#ac1424">1.0117</div>
<div style="left:1284px;width:71px;text-align:right;top:719px;font-size:18px;line-height:18px;color:#262626">28283</div>
<div style="left:1358px;width:71px;text-align:right;top:719px;font-size:18px;line-height:18px;color:#ac1424">1.0742</div>
<div style="left:1432px;width:71px;text-align:right;top:719px;font-size:18px;line-height:18px;color:#262626">28297</div>
<div style="left:1506px;width:69px;text-align:right;top:719px;font-size:18px;line-height:18px;color:#ac1424">1.0737</div>
<div style="left:1644px;width:91px;text-align:right;top:719px;font-size:18px;line-height:18px;color:#147020">44.8</div>
<div style="left:-4px;width:185px;text-align:center;top:749px;font-size:18px;line-height:18px;color:#262626">2021<span style="padding:0 1.5px">/</span>9<span style="padding:0 1.5px">/</span>9</div>
<div style="left:102px;width:168px;text-align:center;top:749px;font-size:18px;line-height:18px;color:#262626">29,959.21</div>
<div style="left:190px;width:168px;text-align:center;top:749px;font-size:18px;line-height:18px;color:#262626">30,097.56</div>
<div style="left:278px;width:168px;text-align:center;top:749px;font-size:18px;line-height:18px;color:#262626">29,909.92</div>
<div style="left:366px;width:174px;text-align:center;top:749px;font-size:18px;line-height:18px;color:#262626">30,008.19</div>
<div style="left:459px;width:166px;text-align:center;top:749px;font-size:18px;line-height:18px;color:#262626">-173.02</div>
<div style="left:545px;width:166px;text-align:center;top:749px;font-size:18px;line-height:18px;color:#262626">-0.6</div>
<div style="left:632px;width:206px;text-align:center;top:749px;font-size:18px;line-height:18px;color:#262626">1,060,087,000</div>
<div style="left:757px;width:157px;text-align:center;top:749px;font-size:18px;line-height:18px;color:#ac1424">陽</div>
<div style="left:835px;width:142px;text-align:center;top:749px;font-size:18px;line-height:18px;color:#262626">8</div>
<div style="left:936px;width:114px;text-align:right;top:749px;font-size:18px;line-height:18px;color:#262626">2218.9</div>
<div style="left:1013px;width:160px;text-align:center;top:749px;font-size:18px;line-height:18px;color:#9c5700">千</div>
<div style="left:1133px;width:73px;text-align:right;top:749px;font-size:18px;line-height:18px;color:#262626">29779</div>
<div style="left:1209px;width:72px;text-align:right;top:749px;font-size:18px;line-height:18px;color:#ac1424">1.0077</div>
<div style="left:1284px;width:71px;text-align:right;top:749px;font-size:18px;line-height:18px;color:#262626">28177</div>
<div style="left:1358px;width:71px;text-align:right;top:749px;font-size:18px;line-height:18px;color:#ac1424">1.065</div>
<div style="left:1432px;width:71px;text-align:right;top:749px;font-size:18px;line-height:18px;color:#262626">28281</div>
<div style="left:1506px;width:69px;text-align:right;top:749px;font-size:18px;line-height:18px;color:#ac1424">1.0611</div>
<div style="left:1644px;width:91px;text-align:right;top:749px;font-size:18px;line-height:18px;color:#147020">41.7</div>
<div style="left:-4px;width:185px;text-align:center;top:779px;font-size:18px;line-height:18px;color:#262626">2021<span style="padding:0 1.5px">/</span>9<span style="padding:0 1.5px">/</span>8</div>
<div style="left:102px;width:168px;text-align:center;top:779px;font-size:18px;line-height:18px;color:#262626">29,819.55</div>
<div style="left:190px;width:168px;text-align:center;top:779px;font-size:18px;line-height:18px;color:#262626">30,241.87</div>
<div style="left:278px;width:168px;text-align:center;top:779px;font-size:18px;line-height:18px;color:#262626">29,787.13</div>
<div style="left:366px;width:174px;text-align:center;top:779px;font-size:18px;line-height:18px;color:#262626">30,181.21</div>
<div style="left:459px;width:166px;text-align:center;top:779px;font-size:18px;line-height:18px;color:#262626">265.07</div>
<div style="left:545px;width:166px;text-align:center;top:779px;font-size:18px;line-height:18px;color:#262626">0.9</div>
<div style="left:632px;width:206px;text-align:center;top:779px;font-size:18px;line-height:18px;color:#262626">1,087,239,700</div>
<div style="left:757px;width:157px;text-align:center;top:779px;font-size:18px;line-height:18px;color:#ac1424">陽</div>
<div style="left:835px;width:142px;text-align:center;top:779px;font-size:18px;line-height:18px;color:#262626">7</div>
<div style="left:936px;width:114px;text-align:right;top:779px;font-size:18px;line-height:18px;color:#262626">2391.92</div>
<div style="left:1013px;width:160px;text-align:center;top:779px;font-size:18px;line-height:18px;color:#9c5700">千</div>
<div style="left:1133px;width:73px;text-align:right;top:779px;font-size:18px;line-height:18px;color:#262626">29486</div>
<div style="left:1209px;width:72px;text-align:right;top:779px;font-size:18px;line-height:18px;color:#ac1424">1.0236</div>
<div style="left:1284px;width:71px;text-align:right;top:779px;font-size:18px;line-height:18px;color:#262626">28080</div>
<div style="left:1358px;width:71px;text-align:right;top:779px;font-size:18px;line-height:18px;color:#ac1424">1.0748</div>
<div style="left:1432px;width:71px;text-align:right;top:779px;font-size:18px;line-height:18px;color:#262626">28267</div>
<div style="left:1506px;width:69px;text-align:right;top:779px;font-size:18px;line-height:18px;color:#ac1424">1.0677</div>
<div style="left:1644px;width:91px;text-align:right;top:779px;font-size:18px;line-height:18px;color:#147020">40.1</div>
<div style="left:-4px;width:185px;text-align:center;top:809px;font-size:18px;line-height:18px;color:#262626">2021<span style="padding:0 1.5px">/</span>9<span style="padding:0 1.5px">/</span>7</div>
<div style="left:102px;width:168px;text-align:center;top:809px;font-size:18px;line-height:18px;color:#262626">29,883.92</div>
<div style="left:190px;width:168px;text-align:center;top:809px;font-size:18px;line-height:18px;color:#262626">30,048.23</div>
<div style="left:278px;width:168px;text-align:center;top:809px;font-size:18px;line-height:18px;color:#262626">29,838.43</div>
<div style="left:366px;width:174px;text-align:center;top:809px;font-size:18px;line-height:18px;color:#262626">29,916.14</div>
<div style="left:459px;width:166px;text-align:center;top:809px;font-size:18px;line-height:18px;color:#262626">256.25</div>
<div style="left:545px;width:166px;text-align:center;top:809px;font-size:18px;line-height:18px;color:#262626">0.9</div>
<div style="left:632px;width:206px;text-align:center;top:809px;font-size:18px;line-height:18px;color:#262626">1,083,202,500</div>
<div style="left:757px;width:157px;text-align:center;top:809px;font-size:18px;line-height:18px;color:#ac1424">陽</div>
<div style="left:835px;width:142px;text-align:center;top:809px;font-size:18px;line-height:18px;color:#262626">6</div>
<div style="left:936px;width:114px;text-align:right;top:809px;font-size:18px;line-height:18px;color:#262626">2126.85</div>
<div style="left:1013px;width:160px;text-align:center;top:809px;font-size:18px;line-height:18px;color:#9c5700">千</div>
<div style="left:1133px;width:73px;text-align:right;top:809px;font-size:18px;line-height:18px;color:#262626">29140</div>
<div style="left:1209px;width:72px;text-align:right;top:809px;font-size:18px;line-height:18px;color:#ac1424">1.0266</div>
<div style="left:1284px;width:71px;text-align:right;top:809px;font-size:18px;line-height:18px;color:#262626">27978</div>
<div style="left:1358px;width:71px;text-align:right;top:809px;font-size:18px;line-height:18px;color:#ac1424">1.0693</div>
<div style="left:1432px;width:71px;text-align:right;top:809px;font-size:18px;line-height:18px;color:#262626">28247</div>
<div style="left:1506px;width:69px;text-align:right;top:809px;font-size:18px;line-height:18px;color:#ac1424">1.0591</div>
<div style="left:1644px;width:91px;text-align:right;top:809px;font-size:18px;line-height:18px;color:#ac1424">39.4</div>
<div style="left:-4px;width:185px;text-align:center;top:839px;font-size:18px;line-height:18px;color:#262626">2021<span style="padding:0 1.5px">/</span>9<span style="padding:0 1.5px">/</span>6</div>
<div style="left:102px;width:168px;text-align:center;top:839px;font-size:18px;line-height:18px;color:#262626">29,501.22</div>
<div style="left:190px;width:168px;text-align:center;top:839px;font-size:18px;line-height:18px;color:#262626">29,705.04</div>
<div style="left:278px;width:168px;text-align:center;top:839px;font-size:18px;line-height:18px;color:#262626">29,469.35</div>
<div style="left:366px;width:174px;text-align:center;top:839px;font-size:18px;line-height:18px;color:#262626">29,659.89</div>
<div style="left:459px;width:166px;text-align:center;top:839px;font-size:18px;line-height:18px;color:#262626">531.78</div>
<div style="left:545px;width:166px;text-align:center;top:839px;font-size:18px;line-height:18px;color:#262626">1.8</div>
<div style="left:632px;width:206px;text-align:center;top:839px;font-size:18px;line-height:18px;color:#262626">1,176,832,400</div>
<div style="left:757px;width:157px;text-align:center;top:839px;font-size:18px;line-height:18px;color:#ac1424">陽</div>
<div style="left:835px;width:142px;text-align:center;top:839px;font-size:18px;line-height:18px;color:#262626">5</div>
<div style="left:936px;width:114px;text-align:right;top:839px;font-size:18px;line-height:18px;color:#262626">1870.6</div>
<div style="left:1013px;width:160px;text-align:center;top:839px;font-size:18px;line-height:18px;color:#9c5700">千</div>
<div style="left:1133px;width:73px;text-align:right;top:839px;font-size:18px;line-height:18px;color:#262626">28774</div>
<div style="left:1209px;width:72px;text-align:right;top:839px;font-size:18px;line-height:18px;color:#ac1424">1.0308</div>
<div style="left:1284px;width:71px;text-align:right;top:839px;font-size:18px;line-height:18px;color:#262626">27893</div>
<div style="left:1358px;width:71px;text-align:right;top:839px;font-size:18px;line-height:18px;color:#ac1424">1.0633</div>
<div style="left:1432px;width:71px;text-align:right;top:839px;font-size:18px;line-height:18px;color:#262626">28231</div>
<div style="left:1506px;width:69px;text-align:right;top:839px;font-size:18px;line-height:18px;color:#ac1424">1.0506</div>
<div style="left:1644px;width:91px;text-align:right;top:839px;font-size:18px;line-height:18px;color:#ac1424">38.7</div>
<div style="left:-4px;width:185px;text-align:center;top:869px;font-size:18px;line-height:18px;color:#262626">2021<span style="padding:0 1.5px">/</span>9<span style="padding:0 1.5px">/</span>3</div>
<div style="left:102px;width:168px;text-align:center;top:869px;font-size:18px;line-height:18px;color:#262626">28,626.48</div>
<div style="left:190px;width:168px;text-align:center;top:869px;font-size:18px;line-height:18px;color:#262626">29,149.65</div>
<div style="left:278px;width:168px;text-align:center;top:869px;font-size:18px;line-height:18px;color:#262626">28,607.87</div>
<div style="left:366px;width:174px;text-align:center;top:869px;font-size:18px;line-height:18px;color:#262626">29,128.11</div>
<div style="left:459px;width:166px;text-align:center;top:869px;font-size:18px;line-height:18px;color:#262626">584.6</div>
<div style="left:545px;width:166px;text-align:center;top:869px;font-size:18px;line-height:18px;color:#262626">2</div>
<div style="left:632px;width:206px;text-align:center;top:869px;font-size:18px;line-height:18px;color:#262626">1,243,105,900</div>
<div style="left:757px;width:157px;text-align:center;top:869px;font-size:18px;line-height:18px;color:#ac1424">陽</div>
<div style="left:835px;width:142px;text-align:center;top:869px;font-size:18px;line-height:18px;color:#262626">4</div>
<div style="left:936px;width:114px;text-align:right;top:869px;font-size:18px;line-height:18px;color:#262626">1338.82</div>
<div style="left:1013px;width:160px;text-align:center;top:869px;font-size:18px;line-height:18px;color:#9c5700">千</div>
<div style="left:1133px;width:73px;text-align:right;top:869px;font-size:18px;line-height:18px;color:#262626">28400</div>
<div style="left:1209px;width:72px;text-align:right;top:869px;font-size:18px;line-height:18px;color:#ac1424">1.0256</div>
<div style="left:1284px;width:71px;text-align:right;top:869px;font-size:18px;line-height:18px;color:#262626">27798</div>
<div style="left:1358px;width:71px;text-align:right;top:869px;font-size:18px;line-height:18px;color:#ac1424">1.0479</div>
<div style="left:1432px;width:71px;text-align:right;top:869px;font-size:18px;line-height:18px;color:#262626">28217</div>
<div style="left:1506px;width:69px;text-align:right;top:869px;font-size:18px;line-height:18px;color:#ac1424">1.0323</div>
<div style="left:1644px;width:91px;text-align:right;top:869px;font-size:18px;line-height:18px;color:#ac1424">39.4</div>
<div style="left:-4px;width:185px;text-align:center;top:899px;font-size:18px;line-height:18px;color:#262626">2021<span style="padding:0 1.5px">/</span>9<span style="padding:0 1.5px">/</span>2</div>
<div style="left:102px;width:168px;text-align:center;top:899px;font-size:18px;line-height:18px;color:#262626">28,522.46</div>
<div style="left:190px;width:168px;text-align:center;top:899px;font-size:18px;line-height:18px;color:#262626">28,626.20</div>
<div style="left:278px;width:168px;text-align:center;top:899px;font-size:18px;line-height:18px;color:#262626">28,412.91</div>
<div style="left:366px;width:174px;text-align:center;top:899px;font-size:18px;line-height:18px;color:#262626">28,543.51</div>
<div style="left:459px;width:166px;text-align:center;top:899px;font-size:18px;line-height:18px;color:#262626">92.49</div>
<div style="left:545px;width:166px;text-align:center;top:899px;font-size:18px;line-height:18px;color:#262626">0.3</div>
<div style="left:632px;width:206px;text-align:center;top:899px;font-size:18px;line-height:18px;color:#262626">914,186,100</div>
<div style="left:757px;width:157px;text-align:center;top:899px;font-size:18px;line-height:18px;color:#ac1424">陽</div>
<div style="left:835px;width:142px;text-align:center;top:899px;font-size:18px;line-height:18px;color:#262626">3</div>
<div style="left:936px;width:114px;text-align:right;top:899px;font-size:18px;line-height:18px;color:#262626">754.22</div>
<div style="left:1133px;width:73px;text-align:right;top:899px;font-size:18px;line-height:18px;color:#262626">28103</div>
<div style="left:1209px;width:72px;text-align:right;top:899px;font-size:18px;line-height:18px;color:#ac1424">1.0157</div>
<div style="left:1284px;width:71px;text-align:right;top:899px;font-size:18px;line-height:18px;color:#262626">27744</div>
<div style="left:1358px;width:71px;text-align:right;top:899px;font-size:18px;line-height:18px;color:#ac1424">1.0288</div>
<div style="left:1432px;width:71px;text-align:right;top:899px;font-size:18px;line-height:18px;color:#262626">28215</div>
<div style="left:1506px;width:69px;text-align:right;top:899px;font-size:18px;line-height:18px;color:#ac1424">1.0117</div>
<div style="left:1644px;width:91px;text-align:right;top:899px;font-size:18px;line-height:18px;color:#147020">41.7</div>
<div style="left:-4px;width:185px;text-align:center;top:929px;font-size:18px;line-height:18px;color:#262626">2021<span style="padding:0 1.5px">/</span>9<span style="padding:0 1.5px">/</span>1</div>
<div style="left:102px;width:168px;text-align:center;top:929px;font-size:18px;line-height:18px;color:#262626">28,179.04</div>
<div style="left:190px;width:168px;text-align:center;top:929px;font-size:18px;line-height:18px;color:#262626">28,457.67</div>
<div style="left:278px;width:168px;text-align:center;top:929px;font-size:18px;line-height:18px;color:#262626">28,179.04</div>
<div style="left:366px;width:174px;text-align:center;top:929px;font-size:18px;line-height:18px;color:#262626">28,451.02</div>
<div style="left:459px;width:166px;text-align:center;top:929px;font-size:18px;line-height:18px;color:#262626">361.48</div>
<div style="left:545px;width:166px;text-align:center;top:929px;font-size:18px;line-height:18px;color:#262626">1.3</div>
<div style="left:632px;width:206px;text-align:center;top:929px;font-size:18px;line-height:18px;color:#262626">954,453,600</div>
<div style="left:757px;width:157px;text-align:center;top:929px;font-size:18px;line-height:18px;color:#ac1424">陽</div>
<div style="left:835px;width:142px;text-align:center;top:929px;font-size:18px;line-height:18px;color:#262626">2</div>
<div style="left:936px;width:114px;text-align:right;top:929px;font-size:18px;line-height:18px;color:#262626">661.73</div>
<div style="left:1133px;width:73px;text-align:right;top:929px;font-size:18px;line-height:18px;color:#262626">27943</div>
<div style="left:1209px;width:72px;text-align:right;top:929px;font-size:18px;line-height:18px;color:#ac1424">1.0182</div>
<div style="left:1284px;width:71px;text-align:right;top:929px;font-size:18px;line-height:18px;color:#262626">27706</div>
<div style="left:1358px;width:71px;text-align:right;top:929px;font-size:18px;line-height:18px;color:#ac1424">1.0269</div>
<div style="left:1432px;width:71px;text-align:right;top:929px;font-size:18px;line-height:18px;color:#262626">28223</div>
<div style="left:1506px;width:69px;text-align:right;top:929px;font-size:18px;line-height:18px;color:#ac1424">1.0081</div>
<div style="left:1644px;width:91px;text-align:right;top:929px;font-size:18px;line-height:18px;color:#147020">40.9</div>
<div style="left:-4px;width:185px;text-align:center;top:959px;font-size:18px;line-height:18px;color:#262626">2021<span style="padding:0 1.5px">/</span>8<span style="padding:0 1.5px">/</span>31</div>
<div style="left:102px;width:168px;text-align:center;top:959px;font-size:18px;line-height:18px;color:#262626">27,690.77</div>
<div style="left:190px;width:168px;text-align:center;top:959px;font-size:18px;line-height:18px;color:#262626">28,158.95</div>
<div style="left:278px;width:168px;text-align:center;top:959px;font-size:18px;line-height:18px;color:#262626">27,602.21</div>
<div style="left:366px;width:174px;text-align:center;top:959px;font-size:18px;line-height:18px;color:#262626">28,089.54</div>
<div style="left:459px;width:166px;text-align:center;top:959px;font-size:18px;line-height:18px;color:#262626">300.25</div>
<div style="left:545px;width:166px;text-align:center;top:959px;font-size:18px;line-height:18px;color:#262626">1.1</div>
<div style="left:632px;width:206px;text-align:center;top:959px;font-size:18px;line-height:18px;color:#262626">944,024,400</div>
<div style="left:757px;width:157px;text-align:center;top:959px;font-size:18px;line-height:18px;color:#ac1424">陽</div>
<div style="left:835px;width:142px;text-align:center;top:959px;font-size:18px;line-height:18px;color:#262626">1</div>
<div style="left:936px;width:114px;text-align:right;top:959px;font-size:18px;line-height:18px;color:#262626">300.25</div>
<div style="left:1133px;width:73px;text-align:right;top:959px;font-size:18px;line-height:18px;color:#262626">27797</div>
<div style="left:1209px;width:72px;text-align:right;top:959px;font-size:18px;line-height:18px;color:#ac1424">1.0105</div>
<div style="left:1284px;width:71px;text-align:right;top:959px;font-size:18px;line-height:18px;color:#262626">27686</div>
<div style="left:1358px;width:71px;text-align:right;top:959px;font-size:18px;line-height:18px;color:#ac1424">1.0146</div>
<div style="left:1432px;width:71px;text-align:right;top:959px;font-size:18px;line-height:18px;color:#262626">28231</div>
<div style="left:1506px;width:69px;text-align:right;top:959px;font-size:18px;line-height:18px;color:#147020">0.995</div>
<div style="left:1644px;width:91px;text-align:right;top:959px;font-size:18px;line-height:18px;color:#ac1424">39.5</div>
<div style="left:404px;top:951px;width:97px;height:33px;border:2px solid #217346;box-sizing:border-box"></div>
<div style="left:1894px;top:263px;width:26px;height:712px;background:#e6e6e6"></div>
<div style="left:1894px;top:293px;width:1px;height:682px;background:#9b9b9b"></div>
<div style="left:1898px;top:284px;width:19px;height:673px;background:#dadada"></div>
<div style="left:1898px;top:265px;width:19px;height:19px;background:#fff;border:1px solid #ababab;box-sizing:border-box"></div>
<svg style="left:1902px;top:271px" width="11" height="6" viewBox="0 0 11 6"><path d="M0.5 5.5 L5.5 0.5 L10.5 5.5 Z" fill="#757575"/></svg>
<div style="left:1898px;top:284px;width:19px;height:36px;background:#fff;border:1px solid #ababab;border-top-width:2px;box-sizing:border-box"></div>
<div style="left:1898px;top:957px;width:19px;height:19px;background:#fff;border:1px solid #ababab;box-sizing:border-box"></div>
<svg style="left:1902px;top:964px" width="11" height="6" viewBox="0 0 11 6"><path d="M0.5 0.5 L5.5 5.5 L10.5 0.5 Z" fill="#757575"/></svg>
<div style="left:0px;top:975px;width:1920px;height:28px;background:#e6e6e6"></div>
<div style="left:0px;top:975px;width:1895px;height:1px;background:#9b9b9b"></div>
<div style="left:0px;top:1003px;width:1920px;height:1px;background:#c8c8c8"></div>
<svg style="left:27px;top:985px" width="7" height="9" viewBox="0 0 7 9"><path d="M6.5 0.5 L0.5 4.5 L6.5 8.5 Z" fill="#1e6b3c"/></svg>
<svg style="left:55px;top:985px" width="7" height="9" viewBox="0 0 7 9"><path d="M0.5 0.5 L6.5 4.5 L0.5 8.5 Z" fill="#1e6b3c"/></svg>
<div style="left:80px;top:990px;width:2px;height:3px;background:#3a3a3a"></div>
<div style="left:85px;top:990px;width:2px;height:3px;background:#3a3a3a"></div>
<div style="left:90px;top:990px;width:2px;height:3px;background:#3a3a3a"></div>
<div style="left:100px;top:979px;width:1px;height:20px;background:#b0b0b0"></div>
<div style="left:114.09px;top:977.88px;font-size:16px;line-height:16px;color:#454545;transform-origin:0 0;transform:scaleX(0.9713);">業種別張り付けば</div>
<div style="left:253px;top:979px;width:1px;height:20px;background:#b0b0b0"></div>
<div style="left:256px;top:978px;width:104px;height:22px;background:#ed7d31"></div>
<div style="left:265.26px;top:978.48px;font-size:16px;line-height:16px;color:#1a1a1a;transform-origin:0 0;transform:scaleX(1.0654);">業種別株価</div>
<div style="left:365px;top:978px;width:70px;height:22px;background:#ed7d31"></div>
<div style="left:373.66px;top:978.48px;font-size:16px;line-height:16px;color:#1a1a1a;transform-origin:0 0;transform:scaleX(1.0685);">業種別</div>
<div style="left:440px;top:978px;width:174px;height:22px;background:#ed7d31"></div>
<div style="left:449.51px;top:978.64px;font-size:16px;line-height:16px;color:#1a1a1a;transform-origin:0 0;transform:scaleX(0.9536);">日別と株価による診断</div>
<div style="left:620px;top:978px;width:94px;height:22px;background:#ed7d31"></div>
<div style="left:630.11px;top:978.48px;font-size:16px;line-height:16px;color:#1a1a1a;transform-origin:0 0;transform:scaleX(1.1128);">20日騰落</div>
<div style="left:719px;top:978px;width:107px;height:22px;background:#ed7d31"></div>
<div style="left:729.27px;top:978.64px;font-size:16px;line-height:16px;color:#1a1a1a;transform-origin:0 0;transform:scaleX(0.9053);">累計　データ</div>
<div style="left:362px;top:979px;width:1px;height:20px;background:#b0b0b0"></div>
<div style="left:437px;top:979px;width:1px;height:20px;background:#b0b0b0"></div>
<div style="left:617px;top:979px;width:1px;height:20px;background:#b0b0b0"></div>
<div style="left:716px;top:979px;width:1px;height:20px;background:#b0b0b0"></div>
<div style="left:828px;top:979px;width:1px;height:20px;background:#b0b0b0"></div>
<div style="left:835.32px;top:978.04px;font-size:16px;line-height:16px;color:#454545;transform-origin:0 0;transform:scaleX(0.9600);">トレンド統計関連</div>
<div style="left:972px;top:975px;width:95px;height:25px;background:#fff"></div>
<div style="left:975px;top:979px;width:89px;height:18px;background:linear-gradient(#ffffff,#ffb3b3)"></div>
<div style="left:972px;top:998px;width:95px;height:2px;background:#1e6b3c"></div>
<div style="left:983.72px;top:977.60px;font-size:17px;line-height:17px;color:#1f7048;transform-origin:0 0;transform:scaleX(1.0903);">日経225</div>
<div style="left:1069px;top:978px;width:11px;height:22px;background:#ff0000"></div>
<div style="left:1088px;top:991px;width:2px;height:3px;background:#1e6b3c"></div>
<div style="left:1093px;top:991px;width:2px;height:3px;background:#1e6b3c"></div>
<div style="left:1098px;top:991px;width:2px;height:3px;background:#1e6b3c"></div>
<svg style="left:1112px;top:980px" width="20" height="20" viewBox="0 0 20 20"><circle cx="10" cy="10" r="9.3" fill="none" stroke="#777" stroke-width="1.2"/><path d="M10 4.5 V15.5 M4.5 10 H15.5" stroke="#555" stroke-width="1.6"/></svg>
<div style="left:1148px;top:983px;width:3px;height:3px;background:#b0b0b0"></div>
<div style="left:1148px;top:988px;width:3px;height:3px;background:#b0b0b0"></div>
<div style="left:1148px;top:993px;width:3px;height:3px;background:#b0b0b0"></div>
<div style="left:1166px;top:981px;width:19px;height:18px;background:#fff;border:1px solid #c6c6c6;box-sizing:border-box"></div>
<svg style="left:1172px;top:985px" width="6" height="10" viewBox="0 0 6 10"><path d="M5.5 0.5 L0.5 5 L5.5 9.5 Z" fill="#757575"/></svg>
<div style="left:1185px;top:981px;width:658px;height:18px;background:#fff;border:1px solid #c6c6c6;box-sizing:border-box"></div>
<div style="left:1843px;top:981px;width:33px;height:18px;background:#dadada"></div>
<div style="left:1876px;top:981px;width:19px;height:18px;background:#fff;border:1px solid #c6c6c6;box-sizing:border-box"></div>
<svg style="left:1883px;top:985px" width="6" height="10" viewBox="0 0 6 10"><path d="M0.5 0.5 L5.5 5 L0.5 9.5 Z" fill="#757575"/></svg>
<div style="left:0px;top:1004px;width:1920px;height:27px;background:#f3f2f1"></div>
<div style="left:9.19px;top:1010.05px;font-size:15px;line-height:15px;color:#444;transform-origin:0 0;transform:scaleX(1.0183);">準備完了</div>
<div style="left:1538px;top:1004px;width:50px;height:26px;background:#c8c6c4"></div>
<svg style="left:1554px;top:1008px" width="17" height="17" viewBox="0 0 17 17"><rect x="0" y="0" width="17" height="17" rx="1" fill="#555"/><rect x="2" y="2" width="2.6" height="2.6" fill="#d8d8d8"/><rect x="2" y="7" width="2.6" height="2.6" fill="#d8d8d8"/><rect x="2" y="12" width="2.6" height="2.6" fill="#d8d8d8"/><rect x="7" y="2" width="2.6" height="2.6" fill="#d8d8d8"/><rect x="7" y="7" width="2.6" height="2.6" fill="#d8d8d8"/><rect x="7" y="12" width="2.6" height="2.6" fill="#d8d8d8"/><rect x="12" y="2" width="2.6" height="2.6" fill="#d8d8d8"/><rect x="12" y="7" width="2.6" height="2.6" fill="#d8d8d8"/><rect x="12" y="12" width="2.6" height="2.6" fill="#d8d8d8"/></svg>
<svg style="left:1604px;top:1008px" width="18" height="17" viewBox="0 0 18 17"><rect x="1" y="1" width="16" height="15" fill="#fff" stroke="#555" stroke-width="2"/><rect x="4.5" y="3.5" width="9" height="10" fill="#ddd" stroke="#444" stroke-width="1.6"/><path d="M6.5 7 H11.5 M6.5 10 H11.5" stroke="#666" stroke-width="1.2"/></svg>
<svg style="left:1654px;top:1008px" width="18" height="17" viewBox="0 0 18 17"><rect x="1" y="1" width="16" height="15" fill="#fff" stroke="#555" stroke-width="2"/><path d="M1 9.5 H11 V1 M5.5 1 V9.5" fill="none" stroke="#555" stroke-width="1.5"/></svg>
<div style="left:1695px;top:1016px;width:10px;height:1px;background:#555"></div>
<div style="left:1711px;top:1017px;width:125px;height:1px;background:#a0a0a0"></div>
<div style="left:1771px;top:1010px;width:6px;height:14px;background:#666"></div>
<div style="left:1842px;top:1016px;width:10px;height:1px;background:#555"></div>
<div style="left:1846px;top:1012px;width:1px;height:10px;background:#555"></div>
<div style="left:1867.28px;top:1007.51px;font-size:17px;line-height:17px;color:#555;transform-origin:0 0;transform:scaleX(0.9740);">100%</div>
<div style="left:0px;top:1031px;width:1920px;height:49px;background:#efe5d2"></div>
<svg style="left:19px;top:1045px" width="22" height="20" viewBox="0 0 22 20"><path d="M0 2.8 L9 1.5 V9.3 H0 Z M10.3 1.3 L21.5 0 V9.3 H10.3 Z M0 10.6 H9 V18.5 L0 17.2 Z M10.3 10.6 H21.5 V20 L10.3 18.7 Z" fill="#111"/></svg>
<div style="left:60px;top:1030px;width:431px;height:50px;background:#fff;border:1px solid #c8c8c8;border-bottom:none;box-sizing:border-box"></div>
<svg style="left:74px;top:1044px" width="22" height="22" viewBox="0 0 22 22"><circle cx="13" cy="8.5" r="7" fill="none" stroke="#222" stroke-width="1.6"/><path d="M8 13.5 L1 20.5" stroke="#222" stroke-width="1.8"/></svg>
<div style="left:108.27px;top:1046.42px;font-size:17px;line-height:17px;color:#333;transform-origin:0 0;transform:scaleX(0.9247);">ここに入力して検索</div>
<svg style="left:510px;top:1045px" width="20" height="20" viewBox="0 0 20 20"><circle cx="10" cy="10" r="8.5" fill="none" stroke="#111" stroke-width="2.4"/></svg>
<svg style="left:570px;top:1044px" width="22" height="22" viewBox="0 0 22 22"><path d="M1 2 H14 M1 20 H14 M3 5.5 H13 V16.5 H3 Z" fill="none" stroke="#111" stroke-width="1.6"/><path d="M19.5 1 V21" stroke="#111" stroke-width="1.4"/><rect x="17.5" y="8" width="4" height="4" fill="#111"/></svg>
<svg style="left:630px;top:1042px" width="28" height="26" viewBox="0 0 28 26"><path d="M0 2 Q0 0 2 0 H10 L13 3 H26 Q28 3 28 5 V24 Q28 26 26 26 H2 Q0 26 0 24 Z" fill="#f4b73c"/><path d="M0 8 H28 V24 Q28 26 26 26 H2 Q0 26 0 24 Z" fill="#ffd766"/><path d="M6 26 V18 H22 V26 H18 V21.5 H10 V26 Z" fill="#3a8ee6"/></svg>
<div style="left:619px;top:1077px;width:51px;height:3px;background:#0a74d2"></div>
<svg style="left:691px;top:1041px" width="30" height="30" viewBox="0 0 30 30"><path d="M9 7 V4 Q9 1 12 1 H18 Q21 1 21 4 V7" fill="none" stroke="#333" stroke-width="2.2"/><rect x="1" y="7" width="28" height="22" rx="2" fill="#2b2b2b"/><rect x="9" y="12" width="5.5" height="5.5" fill="#f25022"/><rect x="15.5" y="12" width="5.5" height="5.5" fill="#7fba00"/><rect x="9" y="18.5" width="5.5" height="5.5" fill="#00a4ef"/><rect x="15.5" y="18.5" width="5.5" height="5.5" fill="#ffb900"/></svg>
<svg style="left:753px;top:1041px" width="30" height="29" viewBox="0 0 30 29"><path d="M0 10 L15 0 L30 10 V29 H0 Z" fill="#0f6cbd"/><path d="M3 10 L15 3 L27 10 V20 H3 Z" fill="#fff"/><path d="M0 10 L15 20 L30 10 V29 H0 Z" fill="#28a8ea"/><path d="M0 29 L15 17 L30 29 Z" fill="#50c4f5"/></svg>
<svg style="left:815px;top:1041px" width="30" height="30" viewBox="0 0 30 30"><defs><linearGradient id="eg" x1="0" y1="0" x2="1" y2="1"><stop offset="0" stop-color="#36c37a"/><stop offset="0.5" stop-color="#1aa0d8"/><stop offset="1" stop-color="#0c59a4"/></linearGradient></defs><path d="M15 1 C24 1 29 7 29 13 C29 18 25 20 21 20 C17 20 14 18 15 15 C11 17 10 22 13 25 C17 29 24 28 27 25 C24 29 19 30 15 30 C7 30 1 24 1 15 C1 7 7 1 15 1 Z" fill="url(#eg)"/></svg>
<div style="left:805px;top:1077px;width:51px;height:3px;background:#0a74d2"></div>
<div style="left:862px;top:1031px;width:56px;height:49px;background:#f8f3e9"></div>
<svg style="left:876px;top:1041px" width="30" height="28" viewBox="0 0 30 28"><rect x="8" y="0" width="22" height="28" rx="2" fill="#21a366"/><rect x="8" y="7" width="22" height="7" fill="#107c41"/><rect x="19" y="0" width="11" height="7" fill="#33c481"/><rect x="8" y="21" width="22" height="7" fill="#185c37"/><rect x="0" y="6" width="16" height="16" rx="1.5" fill="#107c41"/><path d="M4 10 L12 18 M12 10 L4 18" stroke="#fff" stroke-width="2.2"/></svg>
<div style="left:862px;top:1077px;width:61px;height:3px;background:#0a74d2"></div>
<div style="left:918px;top:1031px;width:1px;height:49px;background:#d9cfbd"></div>
<svg style="left:939px;top:1041px" width="30" height="30" viewBox="0 0 30 30"><circle cx="17" cy="15" r="13" fill="#ed6c47"/><path d="M17 2 A13 13 0 0 1 30 15 H17 Z" fill="#ff8f6b"/><path d="M17 15 H30 A13 13 0 0 1 17 28 Z" fill="#d35230"/><rect x="0" y="7" width="16" height="16" rx="1.5" fill="#c43e1c"/><path d="M5 19 V11 H9 Q12 11 12 13.7 Q12 16.5 9 16.5 H5" fill="none" stroke="#fff" stroke-width="2"/></svg>
<div style="left:929px;top:1077px;width:51px;height:3px;background:#0a74d2"></div>
<svg style="left:1448px;top:1046px" width="26" height="20" viewBox="0 0 26 20"><ellipse cx="13" cy="9" rx="11" ry="7" fill="#bfe3f7"/><ellipse cx="8" cy="11" rx="7" ry="5" fill="#d9eefa"/><ellipse cx="17" cy="11" rx="8" ry="5" fill="#a9d8f4"/><path d="M13 13 Q15 16.5 13 18 Q11 16.5 13 13 Z" fill="#2a8ad4"/></svg>
<div style="left:1485.14px;top:1046.86px;font-size:18px;line-height:18px;color:#111;transform-origin:0 0;transform:scaleX(0.9605);">21°C</div>
<div style="left:1534.83px;top:1048.05px;font-size:17px;line-height:17px;color:#111;transform-origin:0 0;transform:scaleX(1.0256);">小雨</div>
<svg style="left:1591px;top:1049px" width="17" height="10" viewBox="0 0 17 10"><path d="M1 9 L8.5 1.5 L16 9" stroke="#111" stroke-width="1.4" fill="none"/></svg>
<svg style="left:1619px;top:1047px" width="21" height="13" viewBox="0 0 21 13"><path d="M4 12.5 Q0.5 12.5 0.5 9 Q0.5 5.5 4 5.5 Q5 1 10 1 Q15 1 16 5 Q20.5 5.5 20.5 9 Q20.5 12.5 17 12.5 Z" fill="#bdbdbd" stroke="#333" stroke-width="1.1"/><path d="M3 12 Q8 6 14 8 Q18 9 20 12" fill="#8a8a8a"/></svg>
<svg style="left:1649px;top:1047px" width="21" height="13" viewBox="0 0 21 13"><path d="M0.5 2.5 H3.5 M2 1 V4.5 M3 4.5 V7" stroke="#111" stroke-width="1.1" fill="none"/><rect x="4.5" y="3.5" width="13" height="8" fill="none" stroke="#111" stroke-width="1.2"/><rect x="6" y="5" width="9" height="5" fill="#111"/><rect x="18" y="6" width="2" height="3" fill="#111"/></svg>
<svg style="left:1681px;top:1043px" width="18" height="18" viewBox="0 0 18 18"><path d="M1.5 16 A15 15 0 0 1 16.5 1 M4.5 16 A12 12 0 0 1 16.5 4 M7.5 16 A9 9 0 0 1 16.5 7 M10.5 16 A6 6 0 0 1 16.5 10" stroke="#333" stroke-width="1.1" fill="none"/><circle cx="15" cy="15.5" r="1.8" fill="#111"/></svg>
<svg style="left:1708px;top:1044px" width="21" height="17" viewBox="0 0 21 17"><path d="M1 5.5 H4 L9 1 V16 L4 11.5 H1 Z" fill="none" stroke="#111" stroke-width="1.2"/><path d="M12 5.5 Q14 8.5 12 11.5 M15 3 Q18.5 8.5 15 14 M18 1 Q22.5 8.5 18 16" stroke="#666" stroke-width="1.1" fill="none"/></svg>
<div style="left:1740.00px;top:1043.56px;font-size:22px;line-height:22px;color:#111;transform-origin:0 0;transform:scaleX(1.0331);">A</div>
<div style="left:1789.27px;top:1034.01px;font-size:17px;line-height:17px;color:#111;transform-origin:0 0;transform:scaleX(0.8543);">20:28</div>
<div style="left:1768.73px;top:1057.35px;font-size:17px;line-height:17px;color:#111;transform-origin:0 0;transform:scaleX(0.9045);">2021/10/01</div>
<svg style="left:1869px;top:1045px" width="32" height="32" viewBox="0 0 32 32"><path d="M0.5 0.5 H20.5 V15.5 H7 L3.5 19 V15.5 H0.5 Z" fill="#111"/><path d="M4 4.5 H17 M4 8 H17 M4 11.5 H13" stroke="#fff" stroke-width="1.3"/><circle cx="19" cy="20" r="9.5" fill="#d6d6d6" stroke="#777" stroke-width="1.2"/></svg>
<div style="left:1884.53px;top:1057.81px;font-size:14px;line-height:14px;color:#111;transform-origin:0 0;transform:scaleX(0.8638);">1</div>
<div style="left:1913px;top:1031px;width:1px;height:49px;background:#c8bca8"></div>
</body></html>
